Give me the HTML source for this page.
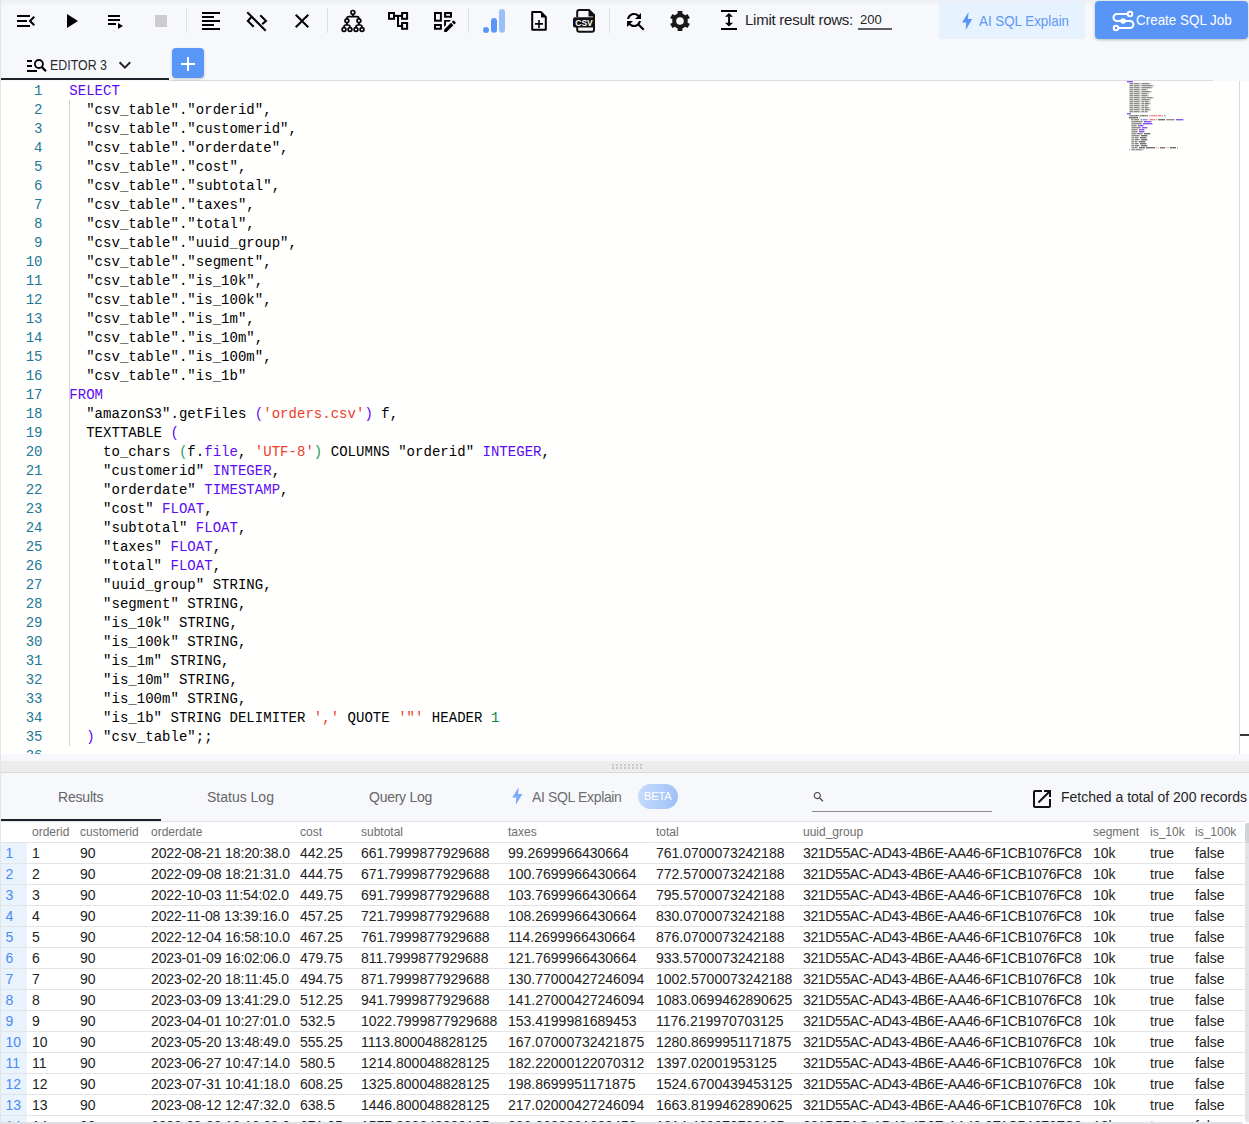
<!DOCTYPE html>
<html><head><meta charset="utf-8"><style>
html,body{margin:0;padding:0}
body{width:1249px;height:1124px;overflow:hidden;position:relative;background:#f7f8fc;font-family:"Liberation Sans",sans-serif}
.abs{position:absolute}
.txt{white-space:pre}
.ln{position:absolute;left:0;width:41.5px;text-align:right;font-family:"Liberation Mono",monospace;font-size:14px;line-height:19px;color:#237893;white-space:pre}
.cl{position:absolute;left:68.3px;font-family:"Liberation Mono",monospace;font-size:14px;line-height:19px;color:#000;white-space:pre;letter-spacing:0.03px}
.hd{font-size:12px;line-height:16px;color:#6e6e6e}
.cell{font-size:14px;line-height:20px;color:#222}
.rn{left:0;width:20px;text-align:left;padding-left:4.5px;font-size:14px;line-height:20px;color:#4a8af4}
</style></head><body>
<div class="abs" style="left:0;top:0;width:1px;height:1124px;background:#e4e4e4;z-index:5"></div>
<div class="abs" style="left:0;top:0;width:1249px;height:6px;background:linear-gradient(#eceef3,#f7f8fc)"></div>
<svg class="abs" style="left:0;top:0" width="760" height="42" viewBox="0 0 760 42"><path transform="translate(14,9)" fill="#000" d="M3 18h13v-2H3v2zm0-5h10v-2H3v2zm0-7v2h13V6H3zm18 9.59L17.42 12 21 8.41 19.59 7l-5 5 5 5L21 15.59z"/><path transform="translate(59,9)" fill="#000" d="M8 5v14l11-7z"/><rect x="108" y="15" width="12" height="2" fill="#000"/><rect x="108" y="19" width="12" height="2" fill="#000"/><rect x="108" y="23" width="8" height="2" fill="#000"/><path d="M118 23L123 26L118 29z" fill="#000"/><rect x="155" y="15" width="12" height="12" fill="#cccccc"/><rect x="186" y="8" width="1" height="25" fill="#dedfe3"/><rect x="327" y="8" width="1" height="25" fill="#dedfe3"/><rect x="468" y="8" width="1" height="25" fill="#dedfe3"/><rect x="609" y="8" width="1" height="25" fill="#dedfe3"/><path transform="translate(199,9)" fill="#000" d="M15 15H3v2h12v-2zm0-8H3v2h12V7zM3 13h18v-2H3v2zm0 8h18v-2H3v2zM3 3v2h18V3H3z"/><g stroke="#000" stroke-width="2" fill="none" stroke-linecap="square"><path d="M248 13L265 30"/><path d="M251 17.5L247.8 21L253 26"/><path d="M261 16L266 21L263 23.5"/></g><path transform="translate(290,9)" fill="#000" d="M19 6.41L17.59 5 12 10.59 6.41 5 5 6.41 10.59 12 5 17.59 6.41 19 12 13.41 17.59 19 19 17.59 13.41 12z"/><g stroke="#000" stroke-width="1.7" fill="none"><circle cx="352.9" cy="12.4" r="1.9"/><path d="M352.9 14.3V16.7"/><path d="M346.9 19V18.7a2 2 0 0 1 2-2h8a2 2 0 0 1 2 2V19"/><circle cx="346.9" cy="20.8" r="1.9"/><circle cx="358.9" cy="20.8" r="1.9"/><path d="M346.9 22.7V25"/><path d="M358.9 22.7V25"/><path d="M344 27.6V27a2 2 0 0 1 2-2h2a2 2 0 0 1 2 2v.6"/><path d="M356 27.6V27a2 2 0 0 1 2-2h2a2 2 0 0 1 2 2v.6"/><circle cx="344" cy="29.5" r="1.9"/><circle cx="350" cy="29.5" r="1.9"/><circle cx="356" cy="29.5" r="1.9"/><circle cx="362" cy="29.5" r="1.9"/></g><g stroke="#000" stroke-width="2" fill="none"><rect x="389" y="13" width="5" height="5.8"/><rect x="402.1" y="13" width="5" height="5.8"/><rect x="402.1" y="23" width="5" height="5.8"/><path d="M394.8 15.9H402"/><path d="M398 15.9V25.9H402"/></g><g stroke="#000" stroke-width="2" fill="none"><rect x="435" y="13" width="5.9" height="7.7"/><rect x="445.1" y="13" width="5.9" height="3.7"/><rect x="435" y="25" width="5.9" height="3.75"/></g><path d="M444.1 20H451L449.2 21.8H446V25L444.1 27z" fill="#000"/><path d="M444.2 32V29.6L451 22.8L453.4 25.2L446.6 32z" fill="#000"/><path d="M451.8 22L453 20.8a0.8 0.8 0 0 1 1.1 0L455.4 22.1a0.8 0.8 0 0 1 0 1.1L454.2 24.4z" fill="#000"/><circle cx="486" cy="30" r="3" fill="#5896f8"/><rect x="491" y="18" width="6" height="14.7" rx="3" fill="#5896f8"/><rect x="499" y="9" width="6" height="23.7" rx="3" fill="#9ac0f8"/><path d="M532.2 12.1H541L545.8 16.9V29.8H532.2z" stroke="#000" stroke-width="2" fill="none" stroke-linejoin="round"/><path d="M541 11.5V17.5H546.5z" fill="#000"/><path d="M535 23.9H543M539 20V28" stroke="#000" stroke-width="1.6"/><path d="M577.2 17V11.9a2 2 0 0 1 2-2H589L594 15V29.7a2 2 0 0 1-2 2H579.2a2 2 0 0 1-2-2V27" stroke="#111" stroke-width="2" fill="none"/><path d="M588.5 9.5V16.5H595z" fill="#111"/><path d="M575 17.2H595V27.6H575a2 2 0 0 1-2-2V19.2a2 2 0 0 1 2-2z" fill="#111"/><text x="584" y="25.6" font-family="Liberation Sans" font-weight="bold" font-size="8.5" fill="#fff" text-anchor="middle">CSV</text><rect x="578.5" y="28.3" width="15" height="1.8" fill="#fff" opacity="0.0"/><path transform="translate(623,9)" fill="#000" d="M11 6c1.38 0 2.63.56 3.54 1.46L12 10h6V4l-2.050 2.05C14.68 4.780 12.93 4 11 4c-3.53 0-6.43 2.61-6.92 6H6.1c.46-2.28 2.48-4 4.9-4zm5.64 9.14c.66-.9 1.12-1.97 1.28-3.14H15.9c-.46 2.28-2.48 4-4.9 4-1.38 0-2.63-.56-3.54-1.46L10 12H4v6l2.05-2.05C7.32 17.22 9.07 18 11 18c1.55 0 2.98-.51 4.14-1.36L20 21.49 21.490 20l-4.85-4.86z"/><rect x="677.6" y="11" width="4.8" height="5" transform="rotate(0 680 21)" fill="#1a1a1a"/><rect x="677.6" y="11" width="4.8" height="5" transform="rotate(60 680 21)" fill="#1a1a1a"/><rect x="677.6" y="11" width="4.8" height="5" transform="rotate(120 680 21)" fill="#1a1a1a"/><rect x="677.6" y="11" width="4.8" height="5" transform="rotate(180 680 21)" fill="#1a1a1a"/><rect x="677.6" y="11" width="4.8" height="5" transform="rotate(240 680 21)" fill="#1a1a1a"/><rect x="677.6" y="11" width="4.8" height="5" transform="rotate(300 680 21)" fill="#1a1a1a"/><circle cx="680" cy="21" r="5.8" fill="none" stroke="#1a1a1a" stroke-width="4"/><rect x="721" y="10" width="16" height="2" fill="#000"/><rect x="721" y="28" width="16" height="2" fill="#000"/><path d="M729 13L733 16.8H725z" fill="#000"/><path d="M729 26.6L733 22.8H725z" fill="#000"/><rect x="728.1" y="16.5" width="1.9" height="6.5" fill="#000"/></svg>
<div class="abs txt" style="left:745px;top:10.8px;font-size:15px;letter-spacing:-0.25px;color:#1f1f1f;line-height:18px">Limit result rows:</div>
<div class="abs txt" style="left:860px;top:12.3px;font-size:13px;color:#1f1f1f;line-height:16px">200</div>
<div class="abs" style="left:858px;top:28px;width:34px;height:2px;background:#5f5f5f"></div>
<div class="abs" style="left:939px;top:1px;width:146px;height:38px;border-radius:4px;background:#e6f2fd"></div>
<svg class="abs" style="left:955px;top:5px" width="30" height="30" viewBox="955 5 30 30"><path d="M968.6 12L967.9 19H972.3L965.7 30L966.2 22.6H962z" fill="#5a96f8"/></svg>
<div class="abs txt" style="left:978.5px;top:12px;font-size:15px;transform:scaleX(0.89);transform-origin:0 0;color:#5e97f6;line-height:18px">AI SQL Explain</div>
<div class="abs" style="left:1095px;top:1px;width:153px;height:38px;border-radius:4px;background:#5995f7;box-shadow:0 1px 3px rgba(0,0,0,0.25)"></div>
<svg class="abs" style="left:1100px;top:0" width="40" height="40" viewBox="1100 0 40 40"><g stroke="#fff" stroke-width="2" fill="none"><path d="M1127.5 14H1117a3.5 3.5 0 0 0 0 7H1130a3.5 3.5 0 0 1 0 7H1118.5"/><circle cx="1130" cy="14" r="2.3"/><circle cx="1116" cy="28" r="2.3"/></g><circle cx="1123.1" cy="21" r="2.8" fill="#fff"/></svg>
<div class="abs txt" style="left:1135.5px;top:10.5px;font-size:15px;transform:scaleX(0.895);transform-origin:0 0;color:#fff;line-height:18px">Create SQL Job</div>
<svg class="abs" style="left:0;top:42px" width="140" height="40" viewBox="0 42 140 40"><g fill="#000"><rect x="27" y="60" width="5" height="2"/><rect x="27" y="65" width="5" height="2"/><rect x="27" y="70" width="10" height="2"/></g><circle cx="38.9" cy="64" r="4" stroke="#000" stroke-width="1.8" fill="none"/><path d="M41.8 67L46 71.2" stroke="#000" stroke-width="2.3"/><path transform="translate(112.9,53)" fill="#222" d="M16.59 8.59L12 13.17 7.41 8.59 6 10l6 6 6-6z"/></svg>
<div class="abs txt" style="left:49.5px;top:56.5px;font-size:14px;transform:scaleX(0.885);transform-origin:0 0;color:#2b2b2b;line-height:17px">EDITOR 3</div>
<div class="abs" style="left:1px;top:78px;width:168px;height:2px;background:#1e232b"></div>
<div class="abs" style="left:169px;top:80px;width:1044px;height:1px;background:#dcdcdc"></div>
<div class="abs" style="left:172px;top:48px;width:32px;height:30px;border-radius:4px;background:#5896f8;box-shadow:0 1px 3px rgba(0,0,0,0.2)"></div>
<div class="abs" style="left:181px;top:63px;width:14px;height:2px;background:#fff"></div><div class="abs" style="left:187px;top:57px;width:2px;height:14px;background:#fff"></div>
<div class="abs" style="left:1px;top:81px;width:1248px;height:673px;background:#fffffe;overflow:hidden">
<div class="ln" style="top:1px">1</div><div class="ln" style="top:20px">2</div><div class="ln" style="top:39px">3</div><div class="ln" style="top:58px">4</div><div class="ln" style="top:77px">5</div><div class="ln" style="top:96px">6</div><div class="ln" style="top:115px">7</div><div class="ln" style="top:134px">8</div><div class="ln" style="top:153px">9</div><div class="ln" style="top:172px">10</div><div class="ln" style="top:191px">11</div><div class="ln" style="top:210px">12</div><div class="ln" style="top:229px">13</div><div class="ln" style="top:248px">14</div><div class="ln" style="top:267px">15</div><div class="ln" style="top:286px">16</div><div class="ln" style="top:305px">17</div><div class="ln" style="top:324px">18</div><div class="ln" style="top:343px">19</div><div class="ln" style="top:362px">20</div><div class="ln" style="top:381px">21</div><div class="ln" style="top:400px">22</div><div class="ln" style="top:419px">23</div><div class="ln" style="top:438px">24</div><div class="ln" style="top:457px">25</div><div class="ln" style="top:476px">26</div><div class="ln" style="top:495px">27</div><div class="ln" style="top:514px">28</div><div class="ln" style="top:533px">29</div><div class="ln" style="top:552px">30</div><div class="ln" style="top:571px">31</div><div class="ln" style="top:590px">32</div><div class="ln" style="top:609px">33</div><div class="ln" style="top:628px">34</div><div class="ln" style="top:647px">35</div><div class="ln" style="top:666px">36</div>
<div class="abs" style="left:68px;top:19px;width:1px;height:646px;background:#d3d3d3"></div>
<div class="cl" style="top:1px"><span style="color:#5a0af5">SELECT</span></div><div class="cl" style="top:20px">  &quot;csv_table&quot;.&quot;orderid&quot;,</div><div class="cl" style="top:39px">  &quot;csv_table&quot;.&quot;customerid&quot;,</div><div class="cl" style="top:58px">  &quot;csv_table&quot;.&quot;orderdate&quot;,</div><div class="cl" style="top:77px">  &quot;csv_table&quot;.&quot;cost&quot;,</div><div class="cl" style="top:96px">  &quot;csv_table&quot;.&quot;subtotal&quot;,</div><div class="cl" style="top:115px">  &quot;csv_table&quot;.&quot;taxes&quot;,</div><div class="cl" style="top:134px">  &quot;csv_table&quot;.&quot;total&quot;,</div><div class="cl" style="top:153px">  &quot;csv_table&quot;.&quot;uuid_group&quot;,</div><div class="cl" style="top:172px">  &quot;csv_table&quot;.&quot;segment&quot;,</div><div class="cl" style="top:191px">  &quot;csv_table&quot;.&quot;is_10k&quot;,</div><div class="cl" style="top:210px">  &quot;csv_table&quot;.&quot;is_100k&quot;,</div><div class="cl" style="top:229px">  &quot;csv_table&quot;.&quot;is_1m&quot;,</div><div class="cl" style="top:248px">  &quot;csv_table&quot;.&quot;is_10m&quot;,</div><div class="cl" style="top:267px">  &quot;csv_table&quot;.&quot;is_100m&quot;,</div><div class="cl" style="top:286px">  &quot;csv_table&quot;.&quot;is_1b&quot;</div><div class="cl" style="top:305px"><span style="color:#5a0af5">FROM</span></div><div class="cl" style="top:324px">  &quot;amazonS3&quot;.getFiles <span style="color:#5a0af5">(</span><span style="color:#ee3b2a">&#x27;orders.csv&#x27;</span><span style="color:#5a0af5">)</span> f,</div><div class="cl" style="top:343px">  TEXTTABLE <span style="color:#5a0af5">(</span></div><div class="cl" style="top:362px">    to_chars <span style="color:#2f9a55">(</span>f.<span style="color:#5a0af5">file</span>, <span style="color:#ee3b2a">&#x27;UTF-8&#x27;</span><span style="color:#2f9a55">)</span> COLUMNS &quot;orderid&quot; <span style="color:#5a0af5">INTEGER</span>,</div><div class="cl" style="top:381px">    &quot;customerid&quot; <span style="color:#5a0af5">INTEGER</span>,</div><div class="cl" style="top:400px">    &quot;orderdate&quot; <span style="color:#5a0af5">TIMESTAMP</span>,</div><div class="cl" style="top:419px">    &quot;cost&quot; <span style="color:#5a0af5">FLOAT</span>,</div><div class="cl" style="top:438px">    &quot;subtotal&quot; <span style="color:#5a0af5">FLOAT</span>,</div><div class="cl" style="top:457px">    &quot;taxes&quot; <span style="color:#5a0af5">FLOAT</span>,</div><div class="cl" style="top:476px">    &quot;total&quot; <span style="color:#5a0af5">FLOAT</span>,</div><div class="cl" style="top:495px">    &quot;uuid_group&quot; STRING,</div><div class="cl" style="top:514px">    &quot;segment&quot; STRING,</div><div class="cl" style="top:533px">    &quot;is_10k&quot; STRING,</div><div class="cl" style="top:552px">    &quot;is_100k&quot; STRING,</div><div class="cl" style="top:571px">    &quot;is_1m&quot; STRING,</div><div class="cl" style="top:590px">    &quot;is_10m&quot; STRING,</div><div class="cl" style="top:609px">    &quot;is_100m&quot; STRING,</div><div class="cl" style="top:628px">    &quot;is_1b&quot; STRING DELIMITER <span style="color:#ee3b2a">&#x27;,&#x27;</span> QUOTE <span style="color:#ee3b2a">&#x27;&quot;&#x27;</span> HEADER <span style="color:#098658">1</span></div><div class="cl" style="top:647px">  <span style="color:#5a0af5">)</span> &quot;csv_table&quot;;;</div>
<svg class="abs" style="left:1126px;top:0" width="90" height="80"><rect x="0" y="0" width="1" height="1" fill="#5a0af5" fill-opacity="0.70"/><rect x="0" y="1" width="1" height="1" fill="#5a0af5" fill-opacity="0.27"/><rect x="1" y="0" width="1" height="1" fill="#5a0af5" fill-opacity="0.70"/><rect x="1" y="1" width="1" height="1" fill="#5a0af5" fill-opacity="0.27"/><rect x="2" y="0" width="1" height="1" fill="#5a0af5" fill-opacity="0.70"/><rect x="2" y="1" width="1" height="1" fill="#5a0af5" fill-opacity="0.27"/><rect x="3" y="0" width="1" height="1" fill="#5a0af5" fill-opacity="0.70"/><rect x="3" y="1" width="1" height="1" fill="#5a0af5" fill-opacity="0.27"/><rect x="4" y="0" width="1" height="1" fill="#5a0af5" fill-opacity="0.70"/><rect x="4" y="1" width="1" height="1" fill="#5a0af5" fill-opacity="0.27"/><rect x="5" y="0" width="1" height="1" fill="#5a0af5" fill-opacity="0.70"/><rect x="5" y="1" width="1" height="1" fill="#5a0af5" fill-opacity="0.27"/><rect x="2" y="2" width="1" height="1" fill="#000" fill-opacity="0.27"/><rect x="2" y="3" width="1" height="1" fill="#000" fill-opacity="0.10"/><rect x="3" y="2" width="1" height="1" fill="#000" fill-opacity="0.45"/><rect x="3" y="3" width="1" height="1" fill="#000" fill-opacity="0.17"/><rect x="4" y="2" width="1" height="1" fill="#000" fill-opacity="0.45"/><rect x="4" y="3" width="1" height="1" fill="#000" fill-opacity="0.17"/><rect x="5" y="2" width="1" height="1" fill="#000" fill-opacity="0.45"/><rect x="5" y="3" width="1" height="1" fill="#000" fill-opacity="0.17"/><rect x="6" y="2" width="1" height="1" fill="#000" fill-opacity="0.20"/><rect x="6" y="3" width="1" height="1" fill="#000" fill-opacity="0.08"/><rect x="7" y="2" width="1" height="1" fill="#000" fill-opacity="0.45"/><rect x="7" y="3" width="1" height="1" fill="#000" fill-opacity="0.17"/><rect x="8" y="2" width="1" height="1" fill="#000" fill-opacity="0.45"/><rect x="8" y="3" width="1" height="1" fill="#000" fill-opacity="0.17"/><rect x="9" y="2" width="1" height="1" fill="#000" fill-opacity="0.45"/><rect x="9" y="3" width="1" height="1" fill="#000" fill-opacity="0.17"/><rect x="10" y="2" width="1" height="1" fill="#000" fill-opacity="0.45"/><rect x="10" y="3" width="1" height="1" fill="#000" fill-opacity="0.17"/><rect x="11" y="2" width="1" height="1" fill="#000" fill-opacity="0.45"/><rect x="11" y="3" width="1" height="1" fill="#000" fill-opacity="0.17"/><rect x="12" y="2" width="1" height="1" fill="#000" fill-opacity="0.27"/><rect x="12" y="3" width="1" height="1" fill="#000" fill-opacity="0.10"/><rect x="13" y="2" width="1" height="1" fill="#000" fill-opacity="0.20"/><rect x="13" y="3" width="1" height="1" fill="#000" fill-opacity="0.08"/><rect x="14" y="2" width="1" height="1" fill="#000" fill-opacity="0.27"/><rect x="14" y="3" width="1" height="1" fill="#000" fill-opacity="0.10"/><rect x="15" y="2" width="1" height="1" fill="#000" fill-opacity="0.45"/><rect x="15" y="3" width="1" height="1" fill="#000" fill-opacity="0.17"/><rect x="16" y="2" width="1" height="1" fill="#000" fill-opacity="0.45"/><rect x="16" y="3" width="1" height="1" fill="#000" fill-opacity="0.17"/><rect x="17" y="2" width="1" height="1" fill="#000" fill-opacity="0.45"/><rect x="17" y="3" width="1" height="1" fill="#000" fill-opacity="0.17"/><rect x="18" y="2" width="1" height="1" fill="#000" fill-opacity="0.45"/><rect x="18" y="3" width="1" height="1" fill="#000" fill-opacity="0.17"/><rect x="19" y="2" width="1" height="1" fill="#000" fill-opacity="0.45"/><rect x="19" y="3" width="1" height="1" fill="#000" fill-opacity="0.17"/><rect x="20" y="2" width="1" height="1" fill="#000" fill-opacity="0.45"/><rect x="20" y="3" width="1" height="1" fill="#000" fill-opacity="0.17"/><rect x="21" y="2" width="1" height="1" fill="#000" fill-opacity="0.45"/><rect x="21" y="3" width="1" height="1" fill="#000" fill-opacity="0.17"/><rect x="22" y="2" width="1" height="1" fill="#000" fill-opacity="0.27"/><rect x="22" y="3" width="1" height="1" fill="#000" fill-opacity="0.10"/><rect x="23" y="2" width="1" height="1" fill="#000" fill-opacity="0.20"/><rect x="23" y="3" width="1" height="1" fill="#000" fill-opacity="0.08"/><rect x="2" y="4" width="1" height="1" fill="#000" fill-opacity="0.27"/><rect x="2" y="5" width="1" height="1" fill="#000" fill-opacity="0.10"/><rect x="3" y="4" width="1" height="1" fill="#000" fill-opacity="0.45"/><rect x="3" y="5" width="1" height="1" fill="#000" fill-opacity="0.17"/><rect x="4" y="4" width="1" height="1" fill="#000" fill-opacity="0.45"/><rect x="4" y="5" width="1" height="1" fill="#000" fill-opacity="0.17"/><rect x="5" y="4" width="1" height="1" fill="#000" fill-opacity="0.45"/><rect x="5" y="5" width="1" height="1" fill="#000" fill-opacity="0.17"/><rect x="6" y="4" width="1" height="1" fill="#000" fill-opacity="0.20"/><rect x="6" y="5" width="1" height="1" fill="#000" fill-opacity="0.08"/><rect x="7" y="4" width="1" height="1" fill="#000" fill-opacity="0.45"/><rect x="7" y="5" width="1" height="1" fill="#000" fill-opacity="0.17"/><rect x="8" y="4" width="1" height="1" fill="#000" fill-opacity="0.45"/><rect x="8" y="5" width="1" height="1" fill="#000" fill-opacity="0.17"/><rect x="9" y="4" width="1" height="1" fill="#000" fill-opacity="0.45"/><rect x="9" y="5" width="1" height="1" fill="#000" fill-opacity="0.17"/><rect x="10" y="4" width="1" height="1" fill="#000" fill-opacity="0.45"/><rect x="10" y="5" width="1" height="1" fill="#000" fill-opacity="0.17"/><rect x="11" y="4" width="1" height="1" fill="#000" fill-opacity="0.45"/><rect x="11" y="5" width="1" height="1" fill="#000" fill-opacity="0.17"/><rect x="12" y="4" width="1" height="1" fill="#000" fill-opacity="0.27"/><rect x="12" y="5" width="1" height="1" fill="#000" fill-opacity="0.10"/><rect x="13" y="4" width="1" height="1" fill="#000" fill-opacity="0.20"/><rect x="13" y="5" width="1" height="1" fill="#000" fill-opacity="0.08"/><rect x="14" y="4" width="1" height="1" fill="#000" fill-opacity="0.27"/><rect x="14" y="5" width="1" height="1" fill="#000" fill-opacity="0.10"/><rect x="15" y="4" width="1" height="1" fill="#000" fill-opacity="0.45"/><rect x="15" y="5" width="1" height="1" fill="#000" fill-opacity="0.17"/><rect x="16" y="4" width="1" height="1" fill="#000" fill-opacity="0.45"/><rect x="16" y="5" width="1" height="1" fill="#000" fill-opacity="0.17"/><rect x="17" y="4" width="1" height="1" fill="#000" fill-opacity="0.45"/><rect x="17" y="5" width="1" height="1" fill="#000" fill-opacity="0.17"/><rect x="18" y="4" width="1" height="1" fill="#000" fill-opacity="0.45"/><rect x="18" y="5" width="1" height="1" fill="#000" fill-opacity="0.17"/><rect x="19" y="4" width="1" height="1" fill="#000" fill-opacity="0.45"/><rect x="19" y="5" width="1" height="1" fill="#000" fill-opacity="0.17"/><rect x="20" y="4" width="1" height="1" fill="#000" fill-opacity="0.45"/><rect x="20" y="5" width="1" height="1" fill="#000" fill-opacity="0.17"/><rect x="21" y="4" width="1" height="1" fill="#000" fill-opacity="0.45"/><rect x="21" y="5" width="1" height="1" fill="#000" fill-opacity="0.17"/><rect x="22" y="4" width="1" height="1" fill="#000" fill-opacity="0.45"/><rect x="22" y="5" width="1" height="1" fill="#000" fill-opacity="0.17"/><rect x="23" y="4" width="1" height="1" fill="#000" fill-opacity="0.45"/><rect x="23" y="5" width="1" height="1" fill="#000" fill-opacity="0.17"/><rect x="24" y="4" width="1" height="1" fill="#000" fill-opacity="0.45"/><rect x="24" y="5" width="1" height="1" fill="#000" fill-opacity="0.17"/><rect x="25" y="4" width="1" height="1" fill="#000" fill-opacity="0.27"/><rect x="25" y="5" width="1" height="1" fill="#000" fill-opacity="0.10"/><rect x="26" y="4" width="1" height="1" fill="#000" fill-opacity="0.20"/><rect x="26" y="5" width="1" height="1" fill="#000" fill-opacity="0.08"/><rect x="2" y="6" width="1" height="1" fill="#000" fill-opacity="0.27"/><rect x="2" y="7" width="1" height="1" fill="#000" fill-opacity="0.10"/><rect x="3" y="6" width="1" height="1" fill="#000" fill-opacity="0.45"/><rect x="3" y="7" width="1" height="1" fill="#000" fill-opacity="0.17"/><rect x="4" y="6" width="1" height="1" fill="#000" fill-opacity="0.45"/><rect x="4" y="7" width="1" height="1" fill="#000" fill-opacity="0.17"/><rect x="5" y="6" width="1" height="1" fill="#000" fill-opacity="0.45"/><rect x="5" y="7" width="1" height="1" fill="#000" fill-opacity="0.17"/><rect x="6" y="6" width="1" height="1" fill="#000" fill-opacity="0.20"/><rect x="6" y="7" width="1" height="1" fill="#000" fill-opacity="0.08"/><rect x="7" y="6" width="1" height="1" fill="#000" fill-opacity="0.45"/><rect x="7" y="7" width="1" height="1" fill="#000" fill-opacity="0.17"/><rect x="8" y="6" width="1" height="1" fill="#000" fill-opacity="0.45"/><rect x="8" y="7" width="1" height="1" fill="#000" fill-opacity="0.17"/><rect x="9" y="6" width="1" height="1" fill="#000" fill-opacity="0.45"/><rect x="9" y="7" width="1" height="1" fill="#000" fill-opacity="0.17"/><rect x="10" y="6" width="1" height="1" fill="#000" fill-opacity="0.45"/><rect x="10" y="7" width="1" height="1" fill="#000" fill-opacity="0.17"/><rect x="11" y="6" width="1" height="1" fill="#000" fill-opacity="0.45"/><rect x="11" y="7" width="1" height="1" fill="#000" fill-opacity="0.17"/><rect x="12" y="6" width="1" height="1" fill="#000" fill-opacity="0.27"/><rect x="12" y="7" width="1" height="1" fill="#000" fill-opacity="0.10"/><rect x="13" y="6" width="1" height="1" fill="#000" fill-opacity="0.20"/><rect x="13" y="7" width="1" height="1" fill="#000" fill-opacity="0.08"/><rect x="14" y="6" width="1" height="1" fill="#000" fill-opacity="0.27"/><rect x="14" y="7" width="1" height="1" fill="#000" fill-opacity="0.10"/><rect x="15" y="6" width="1" height="1" fill="#000" fill-opacity="0.45"/><rect x="15" y="7" width="1" height="1" fill="#000" fill-opacity="0.17"/><rect x="16" y="6" width="1" height="1" fill="#000" fill-opacity="0.45"/><rect x="16" y="7" width="1" height="1" fill="#000" fill-opacity="0.17"/><rect x="17" y="6" width="1" height="1" fill="#000" fill-opacity="0.45"/><rect x="17" y="7" width="1" height="1" fill="#000" fill-opacity="0.17"/><rect x="18" y="6" width="1" height="1" fill="#000" fill-opacity="0.45"/><rect x="18" y="7" width="1" height="1" fill="#000" fill-opacity="0.17"/><rect x="19" y="6" width="1" height="1" fill="#000" fill-opacity="0.45"/><rect x="19" y="7" width="1" height="1" fill="#000" fill-opacity="0.17"/><rect x="20" y="6" width="1" height="1" fill="#000" fill-opacity="0.45"/><rect x="20" y="7" width="1" height="1" fill="#000" fill-opacity="0.17"/><rect x="21" y="6" width="1" height="1" fill="#000" fill-opacity="0.45"/><rect x="21" y="7" width="1" height="1" fill="#000" fill-opacity="0.17"/><rect x="22" y="6" width="1" height="1" fill="#000" fill-opacity="0.45"/><rect x="22" y="7" width="1" height="1" fill="#000" fill-opacity="0.17"/><rect x="23" y="6" width="1" height="1" fill="#000" fill-opacity="0.45"/><rect x="23" y="7" width="1" height="1" fill="#000" fill-opacity="0.17"/><rect x="24" y="6" width="1" height="1" fill="#000" fill-opacity="0.27"/><rect x="24" y="7" width="1" height="1" fill="#000" fill-opacity="0.10"/><rect x="25" y="6" width="1" height="1" fill="#000" fill-opacity="0.20"/><rect x="25" y="7" width="1" height="1" fill="#000" fill-opacity="0.08"/><rect x="2" y="8" width="1" height="1" fill="#000" fill-opacity="0.27"/><rect x="2" y="9" width="1" height="1" fill="#000" fill-opacity="0.10"/><rect x="3" y="8" width="1" height="1" fill="#000" fill-opacity="0.45"/><rect x="3" y="9" width="1" height="1" fill="#000" fill-opacity="0.17"/><rect x="4" y="8" width="1" height="1" fill="#000" fill-opacity="0.45"/><rect x="4" y="9" width="1" height="1" fill="#000" fill-opacity="0.17"/><rect x="5" y="8" width="1" height="1" fill="#000" fill-opacity="0.45"/><rect x="5" y="9" width="1" height="1" fill="#000" fill-opacity="0.17"/><rect x="6" y="8" width="1" height="1" fill="#000" fill-opacity="0.20"/><rect x="6" y="9" width="1" height="1" fill="#000" fill-opacity="0.08"/><rect x="7" y="8" width="1" height="1" fill="#000" fill-opacity="0.45"/><rect x="7" y="9" width="1" height="1" fill="#000" fill-opacity="0.17"/><rect x="8" y="8" width="1" height="1" fill="#000" fill-opacity="0.45"/><rect x="8" y="9" width="1" height="1" fill="#000" fill-opacity="0.17"/><rect x="9" y="8" width="1" height="1" fill="#000" fill-opacity="0.45"/><rect x="9" y="9" width="1" height="1" fill="#000" fill-opacity="0.17"/><rect x="10" y="8" width="1" height="1" fill="#000" fill-opacity="0.45"/><rect x="10" y="9" width="1" height="1" fill="#000" fill-opacity="0.17"/><rect x="11" y="8" width="1" height="1" fill="#000" fill-opacity="0.45"/><rect x="11" y="9" width="1" height="1" fill="#000" fill-opacity="0.17"/><rect x="12" y="8" width="1" height="1" fill="#000" fill-opacity="0.27"/><rect x="12" y="9" width="1" height="1" fill="#000" fill-opacity="0.10"/><rect x="13" y="8" width="1" height="1" fill="#000" fill-opacity="0.20"/><rect x="13" y="9" width="1" height="1" fill="#000" fill-opacity="0.08"/><rect x="14" y="8" width="1" height="1" fill="#000" fill-opacity="0.27"/><rect x="14" y="9" width="1" height="1" fill="#000" fill-opacity="0.10"/><rect x="15" y="8" width="1" height="1" fill="#000" fill-opacity="0.45"/><rect x="15" y="9" width="1" height="1" fill="#000" fill-opacity="0.17"/><rect x="16" y="8" width="1" height="1" fill="#000" fill-opacity="0.45"/><rect x="16" y="9" width="1" height="1" fill="#000" fill-opacity="0.17"/><rect x="17" y="8" width="1" height="1" fill="#000" fill-opacity="0.45"/><rect x="17" y="9" width="1" height="1" fill="#000" fill-opacity="0.17"/><rect x="18" y="8" width="1" height="1" fill="#000" fill-opacity="0.45"/><rect x="18" y="9" width="1" height="1" fill="#000" fill-opacity="0.17"/><rect x="19" y="8" width="1" height="1" fill="#000" fill-opacity="0.27"/><rect x="19" y="9" width="1" height="1" fill="#000" fill-opacity="0.10"/><rect x="20" y="8" width="1" height="1" fill="#000" fill-opacity="0.20"/><rect x="20" y="9" width="1" height="1" fill="#000" fill-opacity="0.08"/><rect x="2" y="10" width="1" height="1" fill="#000" fill-opacity="0.27"/><rect x="2" y="11" width="1" height="1" fill="#000" fill-opacity="0.10"/><rect x="3" y="10" width="1" height="1" fill="#000" fill-opacity="0.45"/><rect x="3" y="11" width="1" height="1" fill="#000" fill-opacity="0.17"/><rect x="4" y="10" width="1" height="1" fill="#000" fill-opacity="0.45"/><rect x="4" y="11" width="1" height="1" fill="#000" fill-opacity="0.17"/><rect x="5" y="10" width="1" height="1" fill="#000" fill-opacity="0.45"/><rect x="5" y="11" width="1" height="1" fill="#000" fill-opacity="0.17"/><rect x="6" y="10" width="1" height="1" fill="#000" fill-opacity="0.20"/><rect x="6" y="11" width="1" height="1" fill="#000" fill-opacity="0.08"/><rect x="7" y="10" width="1" height="1" fill="#000" fill-opacity="0.45"/><rect x="7" y="11" width="1" height="1" fill="#000" fill-opacity="0.17"/><rect x="8" y="10" width="1" height="1" fill="#000" fill-opacity="0.45"/><rect x="8" y="11" width="1" height="1" fill="#000" fill-opacity="0.17"/><rect x="9" y="10" width="1" height="1" fill="#000" fill-opacity="0.45"/><rect x="9" y="11" width="1" height="1" fill="#000" fill-opacity="0.17"/><rect x="10" y="10" width="1" height="1" fill="#000" fill-opacity="0.45"/><rect x="10" y="11" width="1" height="1" fill="#000" fill-opacity="0.17"/><rect x="11" y="10" width="1" height="1" fill="#000" fill-opacity="0.45"/><rect x="11" y="11" width="1" height="1" fill="#000" fill-opacity="0.17"/><rect x="12" y="10" width="1" height="1" fill="#000" fill-opacity="0.27"/><rect x="12" y="11" width="1" height="1" fill="#000" fill-opacity="0.10"/><rect x="13" y="10" width="1" height="1" fill="#000" fill-opacity="0.20"/><rect x="13" y="11" width="1" height="1" fill="#000" fill-opacity="0.08"/><rect x="14" y="10" width="1" height="1" fill="#000" fill-opacity="0.27"/><rect x="14" y="11" width="1" height="1" fill="#000" fill-opacity="0.10"/><rect x="15" y="10" width="1" height="1" fill="#000" fill-opacity="0.45"/><rect x="15" y="11" width="1" height="1" fill="#000" fill-opacity="0.17"/><rect x="16" y="10" width="1" height="1" fill="#000" fill-opacity="0.45"/><rect x="16" y="11" width="1" height="1" fill="#000" fill-opacity="0.17"/><rect x="17" y="10" width="1" height="1" fill="#000" fill-opacity="0.45"/><rect x="17" y="11" width="1" height="1" fill="#000" fill-opacity="0.17"/><rect x="18" y="10" width="1" height="1" fill="#000" fill-opacity="0.45"/><rect x="18" y="11" width="1" height="1" fill="#000" fill-opacity="0.17"/><rect x="19" y="10" width="1" height="1" fill="#000" fill-opacity="0.45"/><rect x="19" y="11" width="1" height="1" fill="#000" fill-opacity="0.17"/><rect x="20" y="10" width="1" height="1" fill="#000" fill-opacity="0.45"/><rect x="20" y="11" width="1" height="1" fill="#000" fill-opacity="0.17"/><rect x="21" y="10" width="1" height="1" fill="#000" fill-opacity="0.45"/><rect x="21" y="11" width="1" height="1" fill="#000" fill-opacity="0.17"/><rect x="22" y="10" width="1" height="1" fill="#000" fill-opacity="0.45"/><rect x="22" y="11" width="1" height="1" fill="#000" fill-opacity="0.17"/><rect x="23" y="10" width="1" height="1" fill="#000" fill-opacity="0.27"/><rect x="23" y="11" width="1" height="1" fill="#000" fill-opacity="0.10"/><rect x="24" y="10" width="1" height="1" fill="#000" fill-opacity="0.20"/><rect x="24" y="11" width="1" height="1" fill="#000" fill-opacity="0.08"/><rect x="2" y="12" width="1" height="1" fill="#000" fill-opacity="0.27"/><rect x="2" y="13" width="1" height="1" fill="#000" fill-opacity="0.10"/><rect x="3" y="12" width="1" height="1" fill="#000" fill-opacity="0.45"/><rect x="3" y="13" width="1" height="1" fill="#000" fill-opacity="0.17"/><rect x="4" y="12" width="1" height="1" fill="#000" fill-opacity="0.45"/><rect x="4" y="13" width="1" height="1" fill="#000" fill-opacity="0.17"/><rect x="5" y="12" width="1" height="1" fill="#000" fill-opacity="0.45"/><rect x="5" y="13" width="1" height="1" fill="#000" fill-opacity="0.17"/><rect x="6" y="12" width="1" height="1" fill="#000" fill-opacity="0.20"/><rect x="6" y="13" width="1" height="1" fill="#000" fill-opacity="0.08"/><rect x="7" y="12" width="1" height="1" fill="#000" fill-opacity="0.45"/><rect x="7" y="13" width="1" height="1" fill="#000" fill-opacity="0.17"/><rect x="8" y="12" width="1" height="1" fill="#000" fill-opacity="0.45"/><rect x="8" y="13" width="1" height="1" fill="#000" fill-opacity="0.17"/><rect x="9" y="12" width="1" height="1" fill="#000" fill-opacity="0.45"/><rect x="9" y="13" width="1" height="1" fill="#000" fill-opacity="0.17"/><rect x="10" y="12" width="1" height="1" fill="#000" fill-opacity="0.45"/><rect x="10" y="13" width="1" height="1" fill="#000" fill-opacity="0.17"/><rect x="11" y="12" width="1" height="1" fill="#000" fill-opacity="0.45"/><rect x="11" y="13" width="1" height="1" fill="#000" fill-opacity="0.17"/><rect x="12" y="12" width="1" height="1" fill="#000" fill-opacity="0.27"/><rect x="12" y="13" width="1" height="1" fill="#000" fill-opacity="0.10"/><rect x="13" y="12" width="1" height="1" fill="#000" fill-opacity="0.20"/><rect x="13" y="13" width="1" height="1" fill="#000" fill-opacity="0.08"/><rect x="14" y="12" width="1" height="1" fill="#000" fill-opacity="0.27"/><rect x="14" y="13" width="1" height="1" fill="#000" fill-opacity="0.10"/><rect x="15" y="12" width="1" height="1" fill="#000" fill-opacity="0.45"/><rect x="15" y="13" width="1" height="1" fill="#000" fill-opacity="0.17"/><rect x="16" y="12" width="1" height="1" fill="#000" fill-opacity="0.45"/><rect x="16" y="13" width="1" height="1" fill="#000" fill-opacity="0.17"/><rect x="17" y="12" width="1" height="1" fill="#000" fill-opacity="0.45"/><rect x="17" y="13" width="1" height="1" fill="#000" fill-opacity="0.17"/><rect x="18" y="12" width="1" height="1" fill="#000" fill-opacity="0.45"/><rect x="18" y="13" width="1" height="1" fill="#000" fill-opacity="0.17"/><rect x="19" y="12" width="1" height="1" fill="#000" fill-opacity="0.45"/><rect x="19" y="13" width="1" height="1" fill="#000" fill-opacity="0.17"/><rect x="20" y="12" width="1" height="1" fill="#000" fill-opacity="0.27"/><rect x="20" y="13" width="1" height="1" fill="#000" fill-opacity="0.10"/><rect x="21" y="12" width="1" height="1" fill="#000" fill-opacity="0.20"/><rect x="21" y="13" width="1" height="1" fill="#000" fill-opacity="0.08"/><rect x="2" y="14" width="1" height="1" fill="#000" fill-opacity="0.27"/><rect x="2" y="15" width="1" height="1" fill="#000" fill-opacity="0.10"/><rect x="3" y="14" width="1" height="1" fill="#000" fill-opacity="0.45"/><rect x="3" y="15" width="1" height="1" fill="#000" fill-opacity="0.17"/><rect x="4" y="14" width="1" height="1" fill="#000" fill-opacity="0.45"/><rect x="4" y="15" width="1" height="1" fill="#000" fill-opacity="0.17"/><rect x="5" y="14" width="1" height="1" fill="#000" fill-opacity="0.45"/><rect x="5" y="15" width="1" height="1" fill="#000" fill-opacity="0.17"/><rect x="6" y="14" width="1" height="1" fill="#000" fill-opacity="0.20"/><rect x="6" y="15" width="1" height="1" fill="#000" fill-opacity="0.08"/><rect x="7" y="14" width="1" height="1" fill="#000" fill-opacity="0.45"/><rect x="7" y="15" width="1" height="1" fill="#000" fill-opacity="0.17"/><rect x="8" y="14" width="1" height="1" fill="#000" fill-opacity="0.45"/><rect x="8" y="15" width="1" height="1" fill="#000" fill-opacity="0.17"/><rect x="9" y="14" width="1" height="1" fill="#000" fill-opacity="0.45"/><rect x="9" y="15" width="1" height="1" fill="#000" fill-opacity="0.17"/><rect x="10" y="14" width="1" height="1" fill="#000" fill-opacity="0.45"/><rect x="10" y="15" width="1" height="1" fill="#000" fill-opacity="0.17"/><rect x="11" y="14" width="1" height="1" fill="#000" fill-opacity="0.45"/><rect x="11" y="15" width="1" height="1" fill="#000" fill-opacity="0.17"/><rect x="12" y="14" width="1" height="1" fill="#000" fill-opacity="0.27"/><rect x="12" y="15" width="1" height="1" fill="#000" fill-opacity="0.10"/><rect x="13" y="14" width="1" height="1" fill="#000" fill-opacity="0.20"/><rect x="13" y="15" width="1" height="1" fill="#000" fill-opacity="0.08"/><rect x="14" y="14" width="1" height="1" fill="#000" fill-opacity="0.27"/><rect x="14" y="15" width="1" height="1" fill="#000" fill-opacity="0.10"/><rect x="15" y="14" width="1" height="1" fill="#000" fill-opacity="0.45"/><rect x="15" y="15" width="1" height="1" fill="#000" fill-opacity="0.17"/><rect x="16" y="14" width="1" height="1" fill="#000" fill-opacity="0.45"/><rect x="16" y="15" width="1" height="1" fill="#000" fill-opacity="0.17"/><rect x="17" y="14" width="1" height="1" fill="#000" fill-opacity="0.45"/><rect x="17" y="15" width="1" height="1" fill="#000" fill-opacity="0.17"/><rect x="18" y="14" width="1" height="1" fill="#000" fill-opacity="0.45"/><rect x="18" y="15" width="1" height="1" fill="#000" fill-opacity="0.17"/><rect x="19" y="14" width="1" height="1" fill="#000" fill-opacity="0.45"/><rect x="19" y="15" width="1" height="1" fill="#000" fill-opacity="0.17"/><rect x="20" y="14" width="1" height="1" fill="#000" fill-opacity="0.27"/><rect x="20" y="15" width="1" height="1" fill="#000" fill-opacity="0.10"/><rect x="21" y="14" width="1" height="1" fill="#000" fill-opacity="0.20"/><rect x="21" y="15" width="1" height="1" fill="#000" fill-opacity="0.08"/><rect x="2" y="16" width="1" height="1" fill="#000" fill-opacity="0.27"/><rect x="2" y="17" width="1" height="1" fill="#000" fill-opacity="0.10"/><rect x="3" y="16" width="1" height="1" fill="#000" fill-opacity="0.45"/><rect x="3" y="17" width="1" height="1" fill="#000" fill-opacity="0.17"/><rect x="4" y="16" width="1" height="1" fill="#000" fill-opacity="0.45"/><rect x="4" y="17" width="1" height="1" fill="#000" fill-opacity="0.17"/><rect x="5" y="16" width="1" height="1" fill="#000" fill-opacity="0.45"/><rect x="5" y="17" width="1" height="1" fill="#000" fill-opacity="0.17"/><rect x="6" y="16" width="1" height="1" fill="#000" fill-opacity="0.20"/><rect x="6" y="17" width="1" height="1" fill="#000" fill-opacity="0.08"/><rect x="7" y="16" width="1" height="1" fill="#000" fill-opacity="0.45"/><rect x="7" y="17" width="1" height="1" fill="#000" fill-opacity="0.17"/><rect x="8" y="16" width="1" height="1" fill="#000" fill-opacity="0.45"/><rect x="8" y="17" width="1" height="1" fill="#000" fill-opacity="0.17"/><rect x="9" y="16" width="1" height="1" fill="#000" fill-opacity="0.45"/><rect x="9" y="17" width="1" height="1" fill="#000" fill-opacity="0.17"/><rect x="10" y="16" width="1" height="1" fill="#000" fill-opacity="0.45"/><rect x="10" y="17" width="1" height="1" fill="#000" fill-opacity="0.17"/><rect x="11" y="16" width="1" height="1" fill="#000" fill-opacity="0.45"/><rect x="11" y="17" width="1" height="1" fill="#000" fill-opacity="0.17"/><rect x="12" y="16" width="1" height="1" fill="#000" fill-opacity="0.27"/><rect x="12" y="17" width="1" height="1" fill="#000" fill-opacity="0.10"/><rect x="13" y="16" width="1" height="1" fill="#000" fill-opacity="0.20"/><rect x="13" y="17" width="1" height="1" fill="#000" fill-opacity="0.08"/><rect x="14" y="16" width="1" height="1" fill="#000" fill-opacity="0.27"/><rect x="14" y="17" width="1" height="1" fill="#000" fill-opacity="0.10"/><rect x="15" y="16" width="1" height="1" fill="#000" fill-opacity="0.45"/><rect x="15" y="17" width="1" height="1" fill="#000" fill-opacity="0.17"/><rect x="16" y="16" width="1" height="1" fill="#000" fill-opacity="0.45"/><rect x="16" y="17" width="1" height="1" fill="#000" fill-opacity="0.17"/><rect x="17" y="16" width="1" height="1" fill="#000" fill-opacity="0.45"/><rect x="17" y="17" width="1" height="1" fill="#000" fill-opacity="0.17"/><rect x="18" y="16" width="1" height="1" fill="#000" fill-opacity="0.45"/><rect x="18" y="17" width="1" height="1" fill="#000" fill-opacity="0.17"/><rect x="19" y="16" width="1" height="1" fill="#000" fill-opacity="0.20"/><rect x="19" y="17" width="1" height="1" fill="#000" fill-opacity="0.08"/><rect x="20" y="16" width="1" height="1" fill="#000" fill-opacity="0.45"/><rect x="20" y="17" width="1" height="1" fill="#000" fill-opacity="0.17"/><rect x="21" y="16" width="1" height="1" fill="#000" fill-opacity="0.45"/><rect x="21" y="17" width="1" height="1" fill="#000" fill-opacity="0.17"/><rect x="22" y="16" width="1" height="1" fill="#000" fill-opacity="0.45"/><rect x="22" y="17" width="1" height="1" fill="#000" fill-opacity="0.17"/><rect x="23" y="16" width="1" height="1" fill="#000" fill-opacity="0.45"/><rect x="23" y="17" width="1" height="1" fill="#000" fill-opacity="0.17"/><rect x="24" y="16" width="1" height="1" fill="#000" fill-opacity="0.45"/><rect x="24" y="17" width="1" height="1" fill="#000" fill-opacity="0.17"/><rect x="25" y="16" width="1" height="1" fill="#000" fill-opacity="0.27"/><rect x="25" y="17" width="1" height="1" fill="#000" fill-opacity="0.10"/><rect x="26" y="16" width="1" height="1" fill="#000" fill-opacity="0.20"/><rect x="26" y="17" width="1" height="1" fill="#000" fill-opacity="0.08"/><rect x="2" y="18" width="1" height="1" fill="#000" fill-opacity="0.27"/><rect x="2" y="19" width="1" height="1" fill="#000" fill-opacity="0.10"/><rect x="3" y="18" width="1" height="1" fill="#000" fill-opacity="0.45"/><rect x="3" y="19" width="1" height="1" fill="#000" fill-opacity="0.17"/><rect x="4" y="18" width="1" height="1" fill="#000" fill-opacity="0.45"/><rect x="4" y="19" width="1" height="1" fill="#000" fill-opacity="0.17"/><rect x="5" y="18" width="1" height="1" fill="#000" fill-opacity="0.45"/><rect x="5" y="19" width="1" height="1" fill="#000" fill-opacity="0.17"/><rect x="6" y="18" width="1" height="1" fill="#000" fill-opacity="0.20"/><rect x="6" y="19" width="1" height="1" fill="#000" fill-opacity="0.08"/><rect x="7" y="18" width="1" height="1" fill="#000" fill-opacity="0.45"/><rect x="7" y="19" width="1" height="1" fill="#000" fill-opacity="0.17"/><rect x="8" y="18" width="1" height="1" fill="#000" fill-opacity="0.45"/><rect x="8" y="19" width="1" height="1" fill="#000" fill-opacity="0.17"/><rect x="9" y="18" width="1" height="1" fill="#000" fill-opacity="0.45"/><rect x="9" y="19" width="1" height="1" fill="#000" fill-opacity="0.17"/><rect x="10" y="18" width="1" height="1" fill="#000" fill-opacity="0.45"/><rect x="10" y="19" width="1" height="1" fill="#000" fill-opacity="0.17"/><rect x="11" y="18" width="1" height="1" fill="#000" fill-opacity="0.45"/><rect x="11" y="19" width="1" height="1" fill="#000" fill-opacity="0.17"/><rect x="12" y="18" width="1" height="1" fill="#000" fill-opacity="0.27"/><rect x="12" y="19" width="1" height="1" fill="#000" fill-opacity="0.10"/><rect x="13" y="18" width="1" height="1" fill="#000" fill-opacity="0.20"/><rect x="13" y="19" width="1" height="1" fill="#000" fill-opacity="0.08"/><rect x="14" y="18" width="1" height="1" fill="#000" fill-opacity="0.27"/><rect x="14" y="19" width="1" height="1" fill="#000" fill-opacity="0.10"/><rect x="15" y="18" width="1" height="1" fill="#000" fill-opacity="0.45"/><rect x="15" y="19" width="1" height="1" fill="#000" fill-opacity="0.17"/><rect x="16" y="18" width="1" height="1" fill="#000" fill-opacity="0.45"/><rect x="16" y="19" width="1" height="1" fill="#000" fill-opacity="0.17"/><rect x="17" y="18" width="1" height="1" fill="#000" fill-opacity="0.45"/><rect x="17" y="19" width="1" height="1" fill="#000" fill-opacity="0.17"/><rect x="18" y="18" width="1" height="1" fill="#000" fill-opacity="0.45"/><rect x="18" y="19" width="1" height="1" fill="#000" fill-opacity="0.17"/><rect x="19" y="18" width="1" height="1" fill="#000" fill-opacity="0.45"/><rect x="19" y="19" width="1" height="1" fill="#000" fill-opacity="0.17"/><rect x="20" y="18" width="1" height="1" fill="#000" fill-opacity="0.45"/><rect x="20" y="19" width="1" height="1" fill="#000" fill-opacity="0.17"/><rect x="21" y="18" width="1" height="1" fill="#000" fill-opacity="0.45"/><rect x="21" y="19" width="1" height="1" fill="#000" fill-opacity="0.17"/><rect x="22" y="18" width="1" height="1" fill="#000" fill-opacity="0.27"/><rect x="22" y="19" width="1" height="1" fill="#000" fill-opacity="0.10"/><rect x="23" y="18" width="1" height="1" fill="#000" fill-opacity="0.20"/><rect x="23" y="19" width="1" height="1" fill="#000" fill-opacity="0.08"/><rect x="2" y="20" width="1" height="1" fill="#000" fill-opacity="0.27"/><rect x="2" y="21" width="1" height="1" fill="#000" fill-opacity="0.10"/><rect x="3" y="20" width="1" height="1" fill="#000" fill-opacity="0.45"/><rect x="3" y="21" width="1" height="1" fill="#000" fill-opacity="0.17"/><rect x="4" y="20" width="1" height="1" fill="#000" fill-opacity="0.45"/><rect x="4" y="21" width="1" height="1" fill="#000" fill-opacity="0.17"/><rect x="5" y="20" width="1" height="1" fill="#000" fill-opacity="0.45"/><rect x="5" y="21" width="1" height="1" fill="#000" fill-opacity="0.17"/><rect x="6" y="20" width="1" height="1" fill="#000" fill-opacity="0.20"/><rect x="6" y="21" width="1" height="1" fill="#000" fill-opacity="0.08"/><rect x="7" y="20" width="1" height="1" fill="#000" fill-opacity="0.45"/><rect x="7" y="21" width="1" height="1" fill="#000" fill-opacity="0.17"/><rect x="8" y="20" width="1" height="1" fill="#000" fill-opacity="0.45"/><rect x="8" y="21" width="1" height="1" fill="#000" fill-opacity="0.17"/><rect x="9" y="20" width="1" height="1" fill="#000" fill-opacity="0.45"/><rect x="9" y="21" width="1" height="1" fill="#000" fill-opacity="0.17"/><rect x="10" y="20" width="1" height="1" fill="#000" fill-opacity="0.45"/><rect x="10" y="21" width="1" height="1" fill="#000" fill-opacity="0.17"/><rect x="11" y="20" width="1" height="1" fill="#000" fill-opacity="0.45"/><rect x="11" y="21" width="1" height="1" fill="#000" fill-opacity="0.17"/><rect x="12" y="20" width="1" height="1" fill="#000" fill-opacity="0.27"/><rect x="12" y="21" width="1" height="1" fill="#000" fill-opacity="0.10"/><rect x="13" y="20" width="1" height="1" fill="#000" fill-opacity="0.20"/><rect x="13" y="21" width="1" height="1" fill="#000" fill-opacity="0.08"/><rect x="14" y="20" width="1" height="1" fill="#000" fill-opacity="0.27"/><rect x="14" y="21" width="1" height="1" fill="#000" fill-opacity="0.10"/><rect x="15" y="20" width="1" height="1" fill="#000" fill-opacity="0.45"/><rect x="15" y="21" width="1" height="1" fill="#000" fill-opacity="0.17"/><rect x="16" y="20" width="1" height="1" fill="#000" fill-opacity="0.45"/><rect x="16" y="21" width="1" height="1" fill="#000" fill-opacity="0.17"/><rect x="17" y="20" width="1" height="1" fill="#000" fill-opacity="0.20"/><rect x="17" y="21" width="1" height="1" fill="#000" fill-opacity="0.08"/><rect x="18" y="20" width="1" height="1" fill="#000" fill-opacity="0.50"/><rect x="18" y="21" width="1" height="1" fill="#000" fill-opacity="0.19"/><rect x="19" y="20" width="1" height="1" fill="#000" fill-opacity="0.50"/><rect x="19" y="21" width="1" height="1" fill="#000" fill-opacity="0.19"/><rect x="20" y="20" width="1" height="1" fill="#000" fill-opacity="0.45"/><rect x="20" y="21" width="1" height="1" fill="#000" fill-opacity="0.17"/><rect x="21" y="20" width="1" height="1" fill="#000" fill-opacity="0.27"/><rect x="21" y="21" width="1" height="1" fill="#000" fill-opacity="0.10"/><rect x="22" y="20" width="1" height="1" fill="#000" fill-opacity="0.20"/><rect x="22" y="21" width="1" height="1" fill="#000" fill-opacity="0.08"/><rect x="2" y="22" width="1" height="1" fill="#000" fill-opacity="0.27"/><rect x="2" y="23" width="1" height="1" fill="#000" fill-opacity="0.10"/><rect x="3" y="22" width="1" height="1" fill="#000" fill-opacity="0.45"/><rect x="3" y="23" width="1" height="1" fill="#000" fill-opacity="0.17"/><rect x="4" y="22" width="1" height="1" fill="#000" fill-opacity="0.45"/><rect x="4" y="23" width="1" height="1" fill="#000" fill-opacity="0.17"/><rect x="5" y="22" width="1" height="1" fill="#000" fill-opacity="0.45"/><rect x="5" y="23" width="1" height="1" fill="#000" fill-opacity="0.17"/><rect x="6" y="22" width="1" height="1" fill="#000" fill-opacity="0.20"/><rect x="6" y="23" width="1" height="1" fill="#000" fill-opacity="0.08"/><rect x="7" y="22" width="1" height="1" fill="#000" fill-opacity="0.45"/><rect x="7" y="23" width="1" height="1" fill="#000" fill-opacity="0.17"/><rect x="8" y="22" width="1" height="1" fill="#000" fill-opacity="0.45"/><rect x="8" y="23" width="1" height="1" fill="#000" fill-opacity="0.17"/><rect x="9" y="22" width="1" height="1" fill="#000" fill-opacity="0.45"/><rect x="9" y="23" width="1" height="1" fill="#000" fill-opacity="0.17"/><rect x="10" y="22" width="1" height="1" fill="#000" fill-opacity="0.45"/><rect x="10" y="23" width="1" height="1" fill="#000" fill-opacity="0.17"/><rect x="11" y="22" width="1" height="1" fill="#000" fill-opacity="0.45"/><rect x="11" y="23" width="1" height="1" fill="#000" fill-opacity="0.17"/><rect x="12" y="22" width="1" height="1" fill="#000" fill-opacity="0.27"/><rect x="12" y="23" width="1" height="1" fill="#000" fill-opacity="0.10"/><rect x="13" y="22" width="1" height="1" fill="#000" fill-opacity="0.20"/><rect x="13" y="23" width="1" height="1" fill="#000" fill-opacity="0.08"/><rect x="14" y="22" width="1" height="1" fill="#000" fill-opacity="0.27"/><rect x="14" y="23" width="1" height="1" fill="#000" fill-opacity="0.10"/><rect x="15" y="22" width="1" height="1" fill="#000" fill-opacity="0.45"/><rect x="15" y="23" width="1" height="1" fill="#000" fill-opacity="0.17"/><rect x="16" y="22" width="1" height="1" fill="#000" fill-opacity="0.45"/><rect x="16" y="23" width="1" height="1" fill="#000" fill-opacity="0.17"/><rect x="17" y="22" width="1" height="1" fill="#000" fill-opacity="0.20"/><rect x="17" y="23" width="1" height="1" fill="#000" fill-opacity="0.08"/><rect x="18" y="22" width="1" height="1" fill="#000" fill-opacity="0.50"/><rect x="18" y="23" width="1" height="1" fill="#000" fill-opacity="0.19"/><rect x="19" y="22" width="1" height="1" fill="#000" fill-opacity="0.50"/><rect x="19" y="23" width="1" height="1" fill="#000" fill-opacity="0.19"/><rect x="20" y="22" width="1" height="1" fill="#000" fill-opacity="0.50"/><rect x="20" y="23" width="1" height="1" fill="#000" fill-opacity="0.19"/><rect x="21" y="22" width="1" height="1" fill="#000" fill-opacity="0.45"/><rect x="21" y="23" width="1" height="1" fill="#000" fill-opacity="0.17"/><rect x="22" y="22" width="1" height="1" fill="#000" fill-opacity="0.27"/><rect x="22" y="23" width="1" height="1" fill="#000" fill-opacity="0.10"/><rect x="23" y="22" width="1" height="1" fill="#000" fill-opacity="0.20"/><rect x="23" y="23" width="1" height="1" fill="#000" fill-opacity="0.08"/><rect x="2" y="24" width="1" height="1" fill="#000" fill-opacity="0.27"/><rect x="2" y="25" width="1" height="1" fill="#000" fill-opacity="0.10"/><rect x="3" y="24" width="1" height="1" fill="#000" fill-opacity="0.45"/><rect x="3" y="25" width="1" height="1" fill="#000" fill-opacity="0.17"/><rect x="4" y="24" width="1" height="1" fill="#000" fill-opacity="0.45"/><rect x="4" y="25" width="1" height="1" fill="#000" fill-opacity="0.17"/><rect x="5" y="24" width="1" height="1" fill="#000" fill-opacity="0.45"/><rect x="5" y="25" width="1" height="1" fill="#000" fill-opacity="0.17"/><rect x="6" y="24" width="1" height="1" fill="#000" fill-opacity="0.20"/><rect x="6" y="25" width="1" height="1" fill="#000" fill-opacity="0.08"/><rect x="7" y="24" width="1" height="1" fill="#000" fill-opacity="0.45"/><rect x="7" y="25" width="1" height="1" fill="#000" fill-opacity="0.17"/><rect x="8" y="24" width="1" height="1" fill="#000" fill-opacity="0.45"/><rect x="8" y="25" width="1" height="1" fill="#000" fill-opacity="0.17"/><rect x="9" y="24" width="1" height="1" fill="#000" fill-opacity="0.45"/><rect x="9" y="25" width="1" height="1" fill="#000" fill-opacity="0.17"/><rect x="10" y="24" width="1" height="1" fill="#000" fill-opacity="0.45"/><rect x="10" y="25" width="1" height="1" fill="#000" fill-opacity="0.17"/><rect x="11" y="24" width="1" height="1" fill="#000" fill-opacity="0.45"/><rect x="11" y="25" width="1" height="1" fill="#000" fill-opacity="0.17"/><rect x="12" y="24" width="1" height="1" fill="#000" fill-opacity="0.27"/><rect x="12" y="25" width="1" height="1" fill="#000" fill-opacity="0.10"/><rect x="13" y="24" width="1" height="1" fill="#000" fill-opacity="0.20"/><rect x="13" y="25" width="1" height="1" fill="#000" fill-opacity="0.08"/><rect x="14" y="24" width="1" height="1" fill="#000" fill-opacity="0.27"/><rect x="14" y="25" width="1" height="1" fill="#000" fill-opacity="0.10"/><rect x="15" y="24" width="1" height="1" fill="#000" fill-opacity="0.45"/><rect x="15" y="25" width="1" height="1" fill="#000" fill-opacity="0.17"/><rect x="16" y="24" width="1" height="1" fill="#000" fill-opacity="0.45"/><rect x="16" y="25" width="1" height="1" fill="#000" fill-opacity="0.17"/><rect x="17" y="24" width="1" height="1" fill="#000" fill-opacity="0.20"/><rect x="17" y="25" width="1" height="1" fill="#000" fill-opacity="0.08"/><rect x="18" y="24" width="1" height="1" fill="#000" fill-opacity="0.50"/><rect x="18" y="25" width="1" height="1" fill="#000" fill-opacity="0.19"/><rect x="19" y="24" width="1" height="1" fill="#000" fill-opacity="0.45"/><rect x="19" y="25" width="1" height="1" fill="#000" fill-opacity="0.17"/><rect x="20" y="24" width="1" height="1" fill="#000" fill-opacity="0.27"/><rect x="20" y="25" width="1" height="1" fill="#000" fill-opacity="0.10"/><rect x="21" y="24" width="1" height="1" fill="#000" fill-opacity="0.20"/><rect x="21" y="25" width="1" height="1" fill="#000" fill-opacity="0.08"/><rect x="2" y="26" width="1" height="1" fill="#000" fill-opacity="0.27"/><rect x="2" y="27" width="1" height="1" fill="#000" fill-opacity="0.10"/><rect x="3" y="26" width="1" height="1" fill="#000" fill-opacity="0.45"/><rect x="3" y="27" width="1" height="1" fill="#000" fill-opacity="0.17"/><rect x="4" y="26" width="1" height="1" fill="#000" fill-opacity="0.45"/><rect x="4" y="27" width="1" height="1" fill="#000" fill-opacity="0.17"/><rect x="5" y="26" width="1" height="1" fill="#000" fill-opacity="0.45"/><rect x="5" y="27" width="1" height="1" fill="#000" fill-opacity="0.17"/><rect x="6" y="26" width="1" height="1" fill="#000" fill-opacity="0.20"/><rect x="6" y="27" width="1" height="1" fill="#000" fill-opacity="0.08"/><rect x="7" y="26" width="1" height="1" fill="#000" fill-opacity="0.45"/><rect x="7" y="27" width="1" height="1" fill="#000" fill-opacity="0.17"/><rect x="8" y="26" width="1" height="1" fill="#000" fill-opacity="0.45"/><rect x="8" y="27" width="1" height="1" fill="#000" fill-opacity="0.17"/><rect x="9" y="26" width="1" height="1" fill="#000" fill-opacity="0.45"/><rect x="9" y="27" width="1" height="1" fill="#000" fill-opacity="0.17"/><rect x="10" y="26" width="1" height="1" fill="#000" fill-opacity="0.45"/><rect x="10" y="27" width="1" height="1" fill="#000" fill-opacity="0.17"/><rect x="11" y="26" width="1" height="1" fill="#000" fill-opacity="0.45"/><rect x="11" y="27" width="1" height="1" fill="#000" fill-opacity="0.17"/><rect x="12" y="26" width="1" height="1" fill="#000" fill-opacity="0.27"/><rect x="12" y="27" width="1" height="1" fill="#000" fill-opacity="0.10"/><rect x="13" y="26" width="1" height="1" fill="#000" fill-opacity="0.20"/><rect x="13" y="27" width="1" height="1" fill="#000" fill-opacity="0.08"/><rect x="14" y="26" width="1" height="1" fill="#000" fill-opacity="0.27"/><rect x="14" y="27" width="1" height="1" fill="#000" fill-opacity="0.10"/><rect x="15" y="26" width="1" height="1" fill="#000" fill-opacity="0.45"/><rect x="15" y="27" width="1" height="1" fill="#000" fill-opacity="0.17"/><rect x="16" y="26" width="1" height="1" fill="#000" fill-opacity="0.45"/><rect x="16" y="27" width="1" height="1" fill="#000" fill-opacity="0.17"/><rect x="17" y="26" width="1" height="1" fill="#000" fill-opacity="0.20"/><rect x="17" y="27" width="1" height="1" fill="#000" fill-opacity="0.08"/><rect x="18" y="26" width="1" height="1" fill="#000" fill-opacity="0.50"/><rect x="18" y="27" width="1" height="1" fill="#000" fill-opacity="0.19"/><rect x="19" y="26" width="1" height="1" fill="#000" fill-opacity="0.50"/><rect x="19" y="27" width="1" height="1" fill="#000" fill-opacity="0.19"/><rect x="20" y="26" width="1" height="1" fill="#000" fill-opacity="0.45"/><rect x="20" y="27" width="1" height="1" fill="#000" fill-opacity="0.17"/><rect x="21" y="26" width="1" height="1" fill="#000" fill-opacity="0.27"/><rect x="21" y="27" width="1" height="1" fill="#000" fill-opacity="0.10"/><rect x="22" y="26" width="1" height="1" fill="#000" fill-opacity="0.20"/><rect x="22" y="27" width="1" height="1" fill="#000" fill-opacity="0.08"/><rect x="2" y="28" width="1" height="1" fill="#000" fill-opacity="0.27"/><rect x="2" y="29" width="1" height="1" fill="#000" fill-opacity="0.10"/><rect x="3" y="28" width="1" height="1" fill="#000" fill-opacity="0.45"/><rect x="3" y="29" width="1" height="1" fill="#000" fill-opacity="0.17"/><rect x="4" y="28" width="1" height="1" fill="#000" fill-opacity="0.45"/><rect x="4" y="29" width="1" height="1" fill="#000" fill-opacity="0.17"/><rect x="5" y="28" width="1" height="1" fill="#000" fill-opacity="0.45"/><rect x="5" y="29" width="1" height="1" fill="#000" fill-opacity="0.17"/><rect x="6" y="28" width="1" height="1" fill="#000" fill-opacity="0.20"/><rect x="6" y="29" width="1" height="1" fill="#000" fill-opacity="0.08"/><rect x="7" y="28" width="1" height="1" fill="#000" fill-opacity="0.45"/><rect x="7" y="29" width="1" height="1" fill="#000" fill-opacity="0.17"/><rect x="8" y="28" width="1" height="1" fill="#000" fill-opacity="0.45"/><rect x="8" y="29" width="1" height="1" fill="#000" fill-opacity="0.17"/><rect x="9" y="28" width="1" height="1" fill="#000" fill-opacity="0.45"/><rect x="9" y="29" width="1" height="1" fill="#000" fill-opacity="0.17"/><rect x="10" y="28" width="1" height="1" fill="#000" fill-opacity="0.45"/><rect x="10" y="29" width="1" height="1" fill="#000" fill-opacity="0.17"/><rect x="11" y="28" width="1" height="1" fill="#000" fill-opacity="0.45"/><rect x="11" y="29" width="1" height="1" fill="#000" fill-opacity="0.17"/><rect x="12" y="28" width="1" height="1" fill="#000" fill-opacity="0.27"/><rect x="12" y="29" width="1" height="1" fill="#000" fill-opacity="0.10"/><rect x="13" y="28" width="1" height="1" fill="#000" fill-opacity="0.20"/><rect x="13" y="29" width="1" height="1" fill="#000" fill-opacity="0.08"/><rect x="14" y="28" width="1" height="1" fill="#000" fill-opacity="0.27"/><rect x="14" y="29" width="1" height="1" fill="#000" fill-opacity="0.10"/><rect x="15" y="28" width="1" height="1" fill="#000" fill-opacity="0.45"/><rect x="15" y="29" width="1" height="1" fill="#000" fill-opacity="0.17"/><rect x="16" y="28" width="1" height="1" fill="#000" fill-opacity="0.45"/><rect x="16" y="29" width="1" height="1" fill="#000" fill-opacity="0.17"/><rect x="17" y="28" width="1" height="1" fill="#000" fill-opacity="0.20"/><rect x="17" y="29" width="1" height="1" fill="#000" fill-opacity="0.08"/><rect x="18" y="28" width="1" height="1" fill="#000" fill-opacity="0.50"/><rect x="18" y="29" width="1" height="1" fill="#000" fill-opacity="0.19"/><rect x="19" y="28" width="1" height="1" fill="#000" fill-opacity="0.50"/><rect x="19" y="29" width="1" height="1" fill="#000" fill-opacity="0.19"/><rect x="20" y="28" width="1" height="1" fill="#000" fill-opacity="0.50"/><rect x="20" y="29" width="1" height="1" fill="#000" fill-opacity="0.19"/><rect x="21" y="28" width="1" height="1" fill="#000" fill-opacity="0.45"/><rect x="21" y="29" width="1" height="1" fill="#000" fill-opacity="0.17"/><rect x="22" y="28" width="1" height="1" fill="#000" fill-opacity="0.27"/><rect x="22" y="29" width="1" height="1" fill="#000" fill-opacity="0.10"/><rect x="23" y="28" width="1" height="1" fill="#000" fill-opacity="0.20"/><rect x="23" y="29" width="1" height="1" fill="#000" fill-opacity="0.08"/><rect x="2" y="30" width="1" height="1" fill="#000" fill-opacity="0.27"/><rect x="2" y="31" width="1" height="1" fill="#000" fill-opacity="0.10"/><rect x="3" y="30" width="1" height="1" fill="#000" fill-opacity="0.45"/><rect x="3" y="31" width="1" height="1" fill="#000" fill-opacity="0.17"/><rect x="4" y="30" width="1" height="1" fill="#000" fill-opacity="0.45"/><rect x="4" y="31" width="1" height="1" fill="#000" fill-opacity="0.17"/><rect x="5" y="30" width="1" height="1" fill="#000" fill-opacity="0.45"/><rect x="5" y="31" width="1" height="1" fill="#000" fill-opacity="0.17"/><rect x="6" y="30" width="1" height="1" fill="#000" fill-opacity="0.20"/><rect x="6" y="31" width="1" height="1" fill="#000" fill-opacity="0.08"/><rect x="7" y="30" width="1" height="1" fill="#000" fill-opacity="0.45"/><rect x="7" y="31" width="1" height="1" fill="#000" fill-opacity="0.17"/><rect x="8" y="30" width="1" height="1" fill="#000" fill-opacity="0.45"/><rect x="8" y="31" width="1" height="1" fill="#000" fill-opacity="0.17"/><rect x="9" y="30" width="1" height="1" fill="#000" fill-opacity="0.45"/><rect x="9" y="31" width="1" height="1" fill="#000" fill-opacity="0.17"/><rect x="10" y="30" width="1" height="1" fill="#000" fill-opacity="0.45"/><rect x="10" y="31" width="1" height="1" fill="#000" fill-opacity="0.17"/><rect x="11" y="30" width="1" height="1" fill="#000" fill-opacity="0.45"/><rect x="11" y="31" width="1" height="1" fill="#000" fill-opacity="0.17"/><rect x="12" y="30" width="1" height="1" fill="#000" fill-opacity="0.27"/><rect x="12" y="31" width="1" height="1" fill="#000" fill-opacity="0.10"/><rect x="13" y="30" width="1" height="1" fill="#000" fill-opacity="0.20"/><rect x="13" y="31" width="1" height="1" fill="#000" fill-opacity="0.08"/><rect x="14" y="30" width="1" height="1" fill="#000" fill-opacity="0.27"/><rect x="14" y="31" width="1" height="1" fill="#000" fill-opacity="0.10"/><rect x="15" y="30" width="1" height="1" fill="#000" fill-opacity="0.45"/><rect x="15" y="31" width="1" height="1" fill="#000" fill-opacity="0.17"/><rect x="16" y="30" width="1" height="1" fill="#000" fill-opacity="0.45"/><rect x="16" y="31" width="1" height="1" fill="#000" fill-opacity="0.17"/><rect x="17" y="30" width="1" height="1" fill="#000" fill-opacity="0.20"/><rect x="17" y="31" width="1" height="1" fill="#000" fill-opacity="0.08"/><rect x="18" y="30" width="1" height="1" fill="#000" fill-opacity="0.50"/><rect x="18" y="31" width="1" height="1" fill="#000" fill-opacity="0.19"/><rect x="19" y="30" width="1" height="1" fill="#000" fill-opacity="0.45"/><rect x="19" y="31" width="1" height="1" fill="#000" fill-opacity="0.17"/><rect x="20" y="30" width="1" height="1" fill="#000" fill-opacity="0.27"/><rect x="20" y="31" width="1" height="1" fill="#000" fill-opacity="0.10"/><rect x="0" y="32" width="1" height="1" fill="#5a0af5" fill-opacity="0.70"/><rect x="0" y="33" width="1" height="1" fill="#5a0af5" fill-opacity="0.27"/><rect x="1" y="32" width="1" height="1" fill="#5a0af5" fill-opacity="0.70"/><rect x="1" y="33" width="1" height="1" fill="#5a0af5" fill-opacity="0.27"/><rect x="2" y="32" width="1" height="1" fill="#5a0af5" fill-opacity="0.70"/><rect x="2" y="33" width="1" height="1" fill="#5a0af5" fill-opacity="0.27"/><rect x="3" y="32" width="1" height="1" fill="#5a0af5" fill-opacity="0.70"/><rect x="3" y="33" width="1" height="1" fill="#5a0af5" fill-opacity="0.27"/><rect x="2" y="34" width="1" height="1" fill="#000" fill-opacity="0.27"/><rect x="2" y="35" width="1" height="1" fill="#000" fill-opacity="0.10"/><rect x="3" y="34" width="1" height="1" fill="#000" fill-opacity="0.45"/><rect x="3" y="35" width="1" height="1" fill="#000" fill-opacity="0.17"/><rect x="4" y="34" width="1" height="1" fill="#000" fill-opacity="0.45"/><rect x="4" y="35" width="1" height="1" fill="#000" fill-opacity="0.17"/><rect x="5" y="34" width="1" height="1" fill="#000" fill-opacity="0.45"/><rect x="5" y="35" width="1" height="1" fill="#000" fill-opacity="0.17"/><rect x="6" y="34" width="1" height="1" fill="#000" fill-opacity="0.45"/><rect x="6" y="35" width="1" height="1" fill="#000" fill-opacity="0.17"/><rect x="7" y="34" width="1" height="1" fill="#000" fill-opacity="0.45"/><rect x="7" y="35" width="1" height="1" fill="#000" fill-opacity="0.17"/><rect x="8" y="34" width="1" height="1" fill="#000" fill-opacity="0.45"/><rect x="8" y="35" width="1" height="1" fill="#000" fill-opacity="0.17"/><rect x="9" y="34" width="1" height="1" fill="#000" fill-opacity="0.56"/><rect x="9" y="35" width="1" height="1" fill="#000" fill-opacity="0.22"/><rect x="10" y="34" width="1" height="1" fill="#000" fill-opacity="0.50"/><rect x="10" y="35" width="1" height="1" fill="#000" fill-opacity="0.19"/><rect x="11" y="34" width="1" height="1" fill="#000" fill-opacity="0.27"/><rect x="11" y="35" width="1" height="1" fill="#000" fill-opacity="0.10"/><rect x="12" y="34" width="1" height="1" fill="#000" fill-opacity="0.20"/><rect x="12" y="35" width="1" height="1" fill="#000" fill-opacity="0.08"/><rect x="13" y="34" width="1" height="1" fill="#000" fill-opacity="0.45"/><rect x="13" y="35" width="1" height="1" fill="#000" fill-opacity="0.17"/><rect x="14" y="34" width="1" height="1" fill="#000" fill-opacity="0.45"/><rect x="14" y="35" width="1" height="1" fill="#000" fill-opacity="0.17"/><rect x="15" y="34" width="1" height="1" fill="#000" fill-opacity="0.45"/><rect x="15" y="35" width="1" height="1" fill="#000" fill-opacity="0.17"/><rect x="16" y="34" width="1" height="1" fill="#000" fill-opacity="0.56"/><rect x="16" y="35" width="1" height="1" fill="#000" fill-opacity="0.22"/><rect x="17" y="34" width="1" height="1" fill="#000" fill-opacity="0.45"/><rect x="17" y="35" width="1" height="1" fill="#000" fill-opacity="0.17"/><rect x="18" y="34" width="1" height="1" fill="#000" fill-opacity="0.45"/><rect x="18" y="35" width="1" height="1" fill="#000" fill-opacity="0.17"/><rect x="19" y="34" width="1" height="1" fill="#000" fill-opacity="0.45"/><rect x="19" y="35" width="1" height="1" fill="#000" fill-opacity="0.17"/><rect x="20" y="34" width="1" height="1" fill="#000" fill-opacity="0.45"/><rect x="20" y="35" width="1" height="1" fill="#000" fill-opacity="0.17"/><rect x="22" y="34" width="1" height="1" fill="#5a0af5" fill-opacity="0.39"/><rect x="22" y="35" width="1" height="1" fill="#5a0af5" fill-opacity="0.15"/><rect x="23" y="34" width="1" height="1" fill="#ee3b2a" fill-opacity="0.34"/><rect x="23" y="35" width="1" height="1" fill="#ee3b2a" fill-opacity="0.13"/><rect x="24" y="34" width="1" height="1" fill="#ee3b2a" fill-opacity="0.56"/><rect x="24" y="35" width="1" height="1" fill="#ee3b2a" fill-opacity="0.22"/><rect x="25" y="34" width="1" height="1" fill="#ee3b2a" fill-opacity="0.56"/><rect x="25" y="35" width="1" height="1" fill="#ee3b2a" fill-opacity="0.22"/><rect x="26" y="34" width="1" height="1" fill="#ee3b2a" fill-opacity="0.56"/><rect x="26" y="35" width="1" height="1" fill="#ee3b2a" fill-opacity="0.22"/><rect x="27" y="34" width="1" height="1" fill="#ee3b2a" fill-opacity="0.56"/><rect x="27" y="35" width="1" height="1" fill="#ee3b2a" fill-opacity="0.22"/><rect x="28" y="34" width="1" height="1" fill="#ee3b2a" fill-opacity="0.56"/><rect x="28" y="35" width="1" height="1" fill="#ee3b2a" fill-opacity="0.22"/><rect x="29" y="34" width="1" height="1" fill="#ee3b2a" fill-opacity="0.56"/><rect x="29" y="35" width="1" height="1" fill="#ee3b2a" fill-opacity="0.22"/><rect x="30" y="34" width="1" height="1" fill="#ee3b2a" fill-opacity="0.25"/><rect x="30" y="35" width="1" height="1" fill="#ee3b2a" fill-opacity="0.10"/><rect x="31" y="34" width="1" height="1" fill="#ee3b2a" fill-opacity="0.56"/><rect x="31" y="35" width="1" height="1" fill="#ee3b2a" fill-opacity="0.22"/><rect x="32" y="34" width="1" height="1" fill="#ee3b2a" fill-opacity="0.56"/><rect x="32" y="35" width="1" height="1" fill="#ee3b2a" fill-opacity="0.22"/><rect x="33" y="34" width="1" height="1" fill="#ee3b2a" fill-opacity="0.56"/><rect x="33" y="35" width="1" height="1" fill="#ee3b2a" fill-opacity="0.22"/><rect x="34" y="34" width="1" height="1" fill="#ee3b2a" fill-opacity="0.34"/><rect x="34" y="35" width="1" height="1" fill="#ee3b2a" fill-opacity="0.13"/><rect x="35" y="34" width="1" height="1" fill="#5a0af5" fill-opacity="0.39"/><rect x="35" y="35" width="1" height="1" fill="#5a0af5" fill-opacity="0.15"/><rect x="37" y="34" width="1" height="1" fill="#000" fill-opacity="0.45"/><rect x="37" y="35" width="1" height="1" fill="#000" fill-opacity="0.17"/><rect x="38" y="34" width="1" height="1" fill="#000" fill-opacity="0.20"/><rect x="38" y="35" width="1" height="1" fill="#000" fill-opacity="0.08"/><rect x="2" y="36" width="1" height="1" fill="#000" fill-opacity="0.56"/><rect x="2" y="37" width="1" height="1" fill="#000" fill-opacity="0.22"/><rect x="3" y="36" width="1" height="1" fill="#000" fill-opacity="0.56"/><rect x="3" y="37" width="1" height="1" fill="#000" fill-opacity="0.22"/><rect x="4" y="36" width="1" height="1" fill="#000" fill-opacity="0.56"/><rect x="4" y="37" width="1" height="1" fill="#000" fill-opacity="0.22"/><rect x="5" y="36" width="1" height="1" fill="#000" fill-opacity="0.56"/><rect x="5" y="37" width="1" height="1" fill="#000" fill-opacity="0.22"/><rect x="6" y="36" width="1" height="1" fill="#000" fill-opacity="0.56"/><rect x="6" y="37" width="1" height="1" fill="#000" fill-opacity="0.22"/><rect x="7" y="36" width="1" height="1" fill="#000" fill-opacity="0.56"/><rect x="7" y="37" width="1" height="1" fill="#000" fill-opacity="0.22"/><rect x="8" y="36" width="1" height="1" fill="#000" fill-opacity="0.56"/><rect x="8" y="37" width="1" height="1" fill="#000" fill-opacity="0.22"/><rect x="9" y="36" width="1" height="1" fill="#000" fill-opacity="0.56"/><rect x="9" y="37" width="1" height="1" fill="#000" fill-opacity="0.22"/><rect x="10" y="36" width="1" height="1" fill="#000" fill-opacity="0.56"/><rect x="10" y="37" width="1" height="1" fill="#000" fill-opacity="0.22"/><rect x="12" y="36" width="1" height="1" fill="#5a0af5" fill-opacity="0.39"/><rect x="12" y="37" width="1" height="1" fill="#5a0af5" fill-opacity="0.15"/><rect x="4" y="38" width="1" height="1" fill="#000" fill-opacity="0.45"/><rect x="4" y="39" width="1" height="1" fill="#000" fill-opacity="0.17"/><rect x="5" y="38" width="1" height="1" fill="#000" fill-opacity="0.45"/><rect x="5" y="39" width="1" height="1" fill="#000" fill-opacity="0.17"/><rect x="6" y="38" width="1" height="1" fill="#000" fill-opacity="0.20"/><rect x="6" y="39" width="1" height="1" fill="#000" fill-opacity="0.08"/><rect x="7" y="38" width="1" height="1" fill="#000" fill-opacity="0.45"/><rect x="7" y="39" width="1" height="1" fill="#000" fill-opacity="0.17"/><rect x="8" y="38" width="1" height="1" fill="#000" fill-opacity="0.45"/><rect x="8" y="39" width="1" height="1" fill="#000" fill-opacity="0.17"/><rect x="9" y="38" width="1" height="1" fill="#000" fill-opacity="0.45"/><rect x="9" y="39" width="1" height="1" fill="#000" fill-opacity="0.17"/><rect x="10" y="38" width="1" height="1" fill="#000" fill-opacity="0.45"/><rect x="10" y="39" width="1" height="1" fill="#000" fill-opacity="0.17"/><rect x="11" y="38" width="1" height="1" fill="#000" fill-opacity="0.45"/><rect x="11" y="39" width="1" height="1" fill="#000" fill-opacity="0.17"/><rect x="13" y="38" width="1" height="1" fill="#2f9a55" fill-opacity="0.39"/><rect x="13" y="39" width="1" height="1" fill="#2f9a55" fill-opacity="0.15"/><rect x="14" y="38" width="1" height="1" fill="#000" fill-opacity="0.45"/><rect x="14" y="39" width="1" height="1" fill="#000" fill-opacity="0.17"/><rect x="15" y="38" width="1" height="1" fill="#000" fill-opacity="0.20"/><rect x="15" y="39" width="1" height="1" fill="#000" fill-opacity="0.08"/><rect x="16" y="38" width="1" height="1" fill="#5a0af5" fill-opacity="0.56"/><rect x="16" y="39" width="1" height="1" fill="#5a0af5" fill-opacity="0.22"/><rect x="17" y="38" width="1" height="1" fill="#5a0af5" fill-opacity="0.56"/><rect x="17" y="39" width="1" height="1" fill="#5a0af5" fill-opacity="0.22"/><rect x="18" y="38" width="1" height="1" fill="#5a0af5" fill-opacity="0.56"/><rect x="18" y="39" width="1" height="1" fill="#5a0af5" fill-opacity="0.22"/><rect x="19" y="38" width="1" height="1" fill="#5a0af5" fill-opacity="0.56"/><rect x="19" y="39" width="1" height="1" fill="#5a0af5" fill-opacity="0.22"/><rect x="20" y="38" width="1" height="1" fill="#000" fill-opacity="0.20"/><rect x="20" y="39" width="1" height="1" fill="#000" fill-opacity="0.08"/><rect x="22" y="38" width="1" height="1" fill="#ee3b2a" fill-opacity="0.34"/><rect x="22" y="39" width="1" height="1" fill="#ee3b2a" fill-opacity="0.13"/><rect x="23" y="38" width="1" height="1" fill="#ee3b2a" fill-opacity="0.70"/><rect x="23" y="39" width="1" height="1" fill="#ee3b2a" fill-opacity="0.27"/><rect x="24" y="38" width="1" height="1" fill="#ee3b2a" fill-opacity="0.70"/><rect x="24" y="39" width="1" height="1" fill="#ee3b2a" fill-opacity="0.27"/><rect x="25" y="38" width="1" height="1" fill="#ee3b2a" fill-opacity="0.70"/><rect x="25" y="39" width="1" height="1" fill="#ee3b2a" fill-opacity="0.27"/><rect x="26" y="38" width="1" height="1" fill="#ee3b2a" fill-opacity="0.39"/><rect x="26" y="39" width="1" height="1" fill="#ee3b2a" fill-opacity="0.15"/><rect x="27" y="38" width="1" height="1" fill="#ee3b2a" fill-opacity="0.62"/><rect x="27" y="39" width="1" height="1" fill="#ee3b2a" fill-opacity="0.24"/><rect x="28" y="38" width="1" height="1" fill="#ee3b2a" fill-opacity="0.34"/><rect x="28" y="39" width="1" height="1" fill="#ee3b2a" fill-opacity="0.13"/><rect x="29" y="38" width="1" height="1" fill="#2f9a55" fill-opacity="0.39"/><rect x="29" y="39" width="1" height="1" fill="#2f9a55" fill-opacity="0.15"/><rect x="31" y="38" width="1" height="1" fill="#000" fill-opacity="0.56"/><rect x="31" y="39" width="1" height="1" fill="#000" fill-opacity="0.22"/><rect x="32" y="38" width="1" height="1" fill="#000" fill-opacity="0.56"/><rect x="32" y="39" width="1" height="1" fill="#000" fill-opacity="0.22"/><rect x="33" y="38" width="1" height="1" fill="#000" fill-opacity="0.56"/><rect x="33" y="39" width="1" height="1" fill="#000" fill-opacity="0.22"/><rect x="34" y="38" width="1" height="1" fill="#000" fill-opacity="0.56"/><rect x="34" y="39" width="1" height="1" fill="#000" fill-opacity="0.22"/><rect x="35" y="38" width="1" height="1" fill="#000" fill-opacity="0.56"/><rect x="35" y="39" width="1" height="1" fill="#000" fill-opacity="0.22"/><rect x="36" y="38" width="1" height="1" fill="#000" fill-opacity="0.56"/><rect x="36" y="39" width="1" height="1" fill="#000" fill-opacity="0.22"/><rect x="37" y="38" width="1" height="1" fill="#000" fill-opacity="0.56"/><rect x="37" y="39" width="1" height="1" fill="#000" fill-opacity="0.22"/><rect x="39" y="38" width="1" height="1" fill="#000" fill-opacity="0.27"/><rect x="39" y="39" width="1" height="1" fill="#000" fill-opacity="0.10"/><rect x="40" y="38" width="1" height="1" fill="#000" fill-opacity="0.45"/><rect x="40" y="39" width="1" height="1" fill="#000" fill-opacity="0.17"/><rect x="41" y="38" width="1" height="1" fill="#000" fill-opacity="0.45"/><rect x="41" y="39" width="1" height="1" fill="#000" fill-opacity="0.17"/><rect x="42" y="38" width="1" height="1" fill="#000" fill-opacity="0.45"/><rect x="42" y="39" width="1" height="1" fill="#000" fill-opacity="0.17"/><rect x="43" y="38" width="1" height="1" fill="#000" fill-opacity="0.45"/><rect x="43" y="39" width="1" height="1" fill="#000" fill-opacity="0.17"/><rect x="44" y="38" width="1" height="1" fill="#000" fill-opacity="0.45"/><rect x="44" y="39" width="1" height="1" fill="#000" fill-opacity="0.17"/><rect x="45" y="38" width="1" height="1" fill="#000" fill-opacity="0.45"/><rect x="45" y="39" width="1" height="1" fill="#000" fill-opacity="0.17"/><rect x="46" y="38" width="1" height="1" fill="#000" fill-opacity="0.45"/><rect x="46" y="39" width="1" height="1" fill="#000" fill-opacity="0.17"/><rect x="47" y="38" width="1" height="1" fill="#000" fill-opacity="0.27"/><rect x="47" y="39" width="1" height="1" fill="#000" fill-opacity="0.10"/><rect x="49" y="38" width="1" height="1" fill="#5a0af5" fill-opacity="0.70"/><rect x="49" y="39" width="1" height="1" fill="#5a0af5" fill-opacity="0.27"/><rect x="50" y="38" width="1" height="1" fill="#5a0af5" fill-opacity="0.70"/><rect x="50" y="39" width="1" height="1" fill="#5a0af5" fill-opacity="0.27"/><rect x="51" y="38" width="1" height="1" fill="#5a0af5" fill-opacity="0.70"/><rect x="51" y="39" width="1" height="1" fill="#5a0af5" fill-opacity="0.27"/><rect x="52" y="38" width="1" height="1" fill="#5a0af5" fill-opacity="0.70"/><rect x="52" y="39" width="1" height="1" fill="#5a0af5" fill-opacity="0.27"/><rect x="53" y="38" width="1" height="1" fill="#5a0af5" fill-opacity="0.70"/><rect x="53" y="39" width="1" height="1" fill="#5a0af5" fill-opacity="0.27"/><rect x="54" y="38" width="1" height="1" fill="#5a0af5" fill-opacity="0.70"/><rect x="54" y="39" width="1" height="1" fill="#5a0af5" fill-opacity="0.27"/><rect x="55" y="38" width="1" height="1" fill="#5a0af5" fill-opacity="0.70"/><rect x="55" y="39" width="1" height="1" fill="#5a0af5" fill-opacity="0.27"/><rect x="56" y="38" width="1" height="1" fill="#000" fill-opacity="0.20"/><rect x="56" y="39" width="1" height="1" fill="#000" fill-opacity="0.08"/><rect x="4" y="40" width="1" height="1" fill="#000" fill-opacity="0.27"/><rect x="4" y="41" width="1" height="1" fill="#000" fill-opacity="0.10"/><rect x="5" y="40" width="1" height="1" fill="#000" fill-opacity="0.45"/><rect x="5" y="41" width="1" height="1" fill="#000" fill-opacity="0.17"/><rect x="6" y="40" width="1" height="1" fill="#000" fill-opacity="0.45"/><rect x="6" y="41" width="1" height="1" fill="#000" fill-opacity="0.17"/><rect x="7" y="40" width="1" height="1" fill="#000" fill-opacity="0.45"/><rect x="7" y="41" width="1" height="1" fill="#000" fill-opacity="0.17"/><rect x="8" y="40" width="1" height="1" fill="#000" fill-opacity="0.45"/><rect x="8" y="41" width="1" height="1" fill="#000" fill-opacity="0.17"/><rect x="9" y="40" width="1" height="1" fill="#000" fill-opacity="0.45"/><rect x="9" y="41" width="1" height="1" fill="#000" fill-opacity="0.17"/><rect x="10" y="40" width="1" height="1" fill="#000" fill-opacity="0.45"/><rect x="10" y="41" width="1" height="1" fill="#000" fill-opacity="0.17"/><rect x="11" y="40" width="1" height="1" fill="#000" fill-opacity="0.45"/><rect x="11" y="41" width="1" height="1" fill="#000" fill-opacity="0.17"/><rect x="12" y="40" width="1" height="1" fill="#000" fill-opacity="0.45"/><rect x="12" y="41" width="1" height="1" fill="#000" fill-opacity="0.17"/><rect x="13" y="40" width="1" height="1" fill="#000" fill-opacity="0.45"/><rect x="13" y="41" width="1" height="1" fill="#000" fill-opacity="0.17"/><rect x="14" y="40" width="1" height="1" fill="#000" fill-opacity="0.45"/><rect x="14" y="41" width="1" height="1" fill="#000" fill-opacity="0.17"/><rect x="15" y="40" width="1" height="1" fill="#000" fill-opacity="0.27"/><rect x="15" y="41" width="1" height="1" fill="#000" fill-opacity="0.10"/><rect x="17" y="40" width="1" height="1" fill="#5a0af5" fill-opacity="0.70"/><rect x="17" y="41" width="1" height="1" fill="#5a0af5" fill-opacity="0.27"/><rect x="18" y="40" width="1" height="1" fill="#5a0af5" fill-opacity="0.70"/><rect x="18" y="41" width="1" height="1" fill="#5a0af5" fill-opacity="0.27"/><rect x="19" y="40" width="1" height="1" fill="#5a0af5" fill-opacity="0.70"/><rect x="19" y="41" width="1" height="1" fill="#5a0af5" fill-opacity="0.27"/><rect x="20" y="40" width="1" height="1" fill="#5a0af5" fill-opacity="0.70"/><rect x="20" y="41" width="1" height="1" fill="#5a0af5" fill-opacity="0.27"/><rect x="21" y="40" width="1" height="1" fill="#5a0af5" fill-opacity="0.70"/><rect x="21" y="41" width="1" height="1" fill="#5a0af5" fill-opacity="0.27"/><rect x="22" y="40" width="1" height="1" fill="#5a0af5" fill-opacity="0.70"/><rect x="22" y="41" width="1" height="1" fill="#5a0af5" fill-opacity="0.27"/><rect x="23" y="40" width="1" height="1" fill="#5a0af5" fill-opacity="0.70"/><rect x="23" y="41" width="1" height="1" fill="#5a0af5" fill-opacity="0.27"/><rect x="24" y="40" width="1" height="1" fill="#000" fill-opacity="0.20"/><rect x="24" y="41" width="1" height="1" fill="#000" fill-opacity="0.08"/><rect x="4" y="42" width="1" height="1" fill="#000" fill-opacity="0.27"/><rect x="4" y="43" width="1" height="1" fill="#000" fill-opacity="0.10"/><rect x="5" y="42" width="1" height="1" fill="#000" fill-opacity="0.45"/><rect x="5" y="43" width="1" height="1" fill="#000" fill-opacity="0.17"/><rect x="6" y="42" width="1" height="1" fill="#000" fill-opacity="0.45"/><rect x="6" y="43" width="1" height="1" fill="#000" fill-opacity="0.17"/><rect x="7" y="42" width="1" height="1" fill="#000" fill-opacity="0.45"/><rect x="7" y="43" width="1" height="1" fill="#000" fill-opacity="0.17"/><rect x="8" y="42" width="1" height="1" fill="#000" fill-opacity="0.45"/><rect x="8" y="43" width="1" height="1" fill="#000" fill-opacity="0.17"/><rect x="9" y="42" width="1" height="1" fill="#000" fill-opacity="0.45"/><rect x="9" y="43" width="1" height="1" fill="#000" fill-opacity="0.17"/><rect x="10" y="42" width="1" height="1" fill="#000" fill-opacity="0.45"/><rect x="10" y="43" width="1" height="1" fill="#000" fill-opacity="0.17"/><rect x="11" y="42" width="1" height="1" fill="#000" fill-opacity="0.45"/><rect x="11" y="43" width="1" height="1" fill="#000" fill-opacity="0.17"/><rect x="12" y="42" width="1" height="1" fill="#000" fill-opacity="0.45"/><rect x="12" y="43" width="1" height="1" fill="#000" fill-opacity="0.17"/><rect x="13" y="42" width="1" height="1" fill="#000" fill-opacity="0.45"/><rect x="13" y="43" width="1" height="1" fill="#000" fill-opacity="0.17"/><rect x="14" y="42" width="1" height="1" fill="#000" fill-opacity="0.27"/><rect x="14" y="43" width="1" height="1" fill="#000" fill-opacity="0.10"/><rect x="16" y="42" width="1" height="1" fill="#5a0af5" fill-opacity="0.70"/><rect x="16" y="43" width="1" height="1" fill="#5a0af5" fill-opacity="0.27"/><rect x="17" y="42" width="1" height="1" fill="#5a0af5" fill-opacity="0.70"/><rect x="17" y="43" width="1" height="1" fill="#5a0af5" fill-opacity="0.27"/><rect x="18" y="42" width="1" height="1" fill="#5a0af5" fill-opacity="0.70"/><rect x="18" y="43" width="1" height="1" fill="#5a0af5" fill-opacity="0.27"/><rect x="19" y="42" width="1" height="1" fill="#5a0af5" fill-opacity="0.70"/><rect x="19" y="43" width="1" height="1" fill="#5a0af5" fill-opacity="0.27"/><rect x="20" y="42" width="1" height="1" fill="#5a0af5" fill-opacity="0.70"/><rect x="20" y="43" width="1" height="1" fill="#5a0af5" fill-opacity="0.27"/><rect x="21" y="42" width="1" height="1" fill="#5a0af5" fill-opacity="0.70"/><rect x="21" y="43" width="1" height="1" fill="#5a0af5" fill-opacity="0.27"/><rect x="22" y="42" width="1" height="1" fill="#5a0af5" fill-opacity="0.70"/><rect x="22" y="43" width="1" height="1" fill="#5a0af5" fill-opacity="0.27"/><rect x="23" y="42" width="1" height="1" fill="#5a0af5" fill-opacity="0.70"/><rect x="23" y="43" width="1" height="1" fill="#5a0af5" fill-opacity="0.27"/><rect x="24" y="42" width="1" height="1" fill="#5a0af5" fill-opacity="0.70"/><rect x="24" y="43" width="1" height="1" fill="#5a0af5" fill-opacity="0.27"/><rect x="25" y="42" width="1" height="1" fill="#000" fill-opacity="0.20"/><rect x="25" y="43" width="1" height="1" fill="#000" fill-opacity="0.08"/><rect x="4" y="44" width="1" height="1" fill="#000" fill-opacity="0.27"/><rect x="4" y="45" width="1" height="1" fill="#000" fill-opacity="0.10"/><rect x="5" y="44" width="1" height="1" fill="#000" fill-opacity="0.45"/><rect x="5" y="45" width="1" height="1" fill="#000" fill-opacity="0.17"/><rect x="6" y="44" width="1" height="1" fill="#000" fill-opacity="0.45"/><rect x="6" y="45" width="1" height="1" fill="#000" fill-opacity="0.17"/><rect x="7" y="44" width="1" height="1" fill="#000" fill-opacity="0.45"/><rect x="7" y="45" width="1" height="1" fill="#000" fill-opacity="0.17"/><rect x="8" y="44" width="1" height="1" fill="#000" fill-opacity="0.45"/><rect x="8" y="45" width="1" height="1" fill="#000" fill-opacity="0.17"/><rect x="9" y="44" width="1" height="1" fill="#000" fill-opacity="0.27"/><rect x="9" y="45" width="1" height="1" fill="#000" fill-opacity="0.10"/><rect x="11" y="44" width="1" height="1" fill="#5a0af5" fill-opacity="0.70"/><rect x="11" y="45" width="1" height="1" fill="#5a0af5" fill-opacity="0.27"/><rect x="12" y="44" width="1" height="1" fill="#5a0af5" fill-opacity="0.70"/><rect x="12" y="45" width="1" height="1" fill="#5a0af5" fill-opacity="0.27"/><rect x="13" y="44" width="1" height="1" fill="#5a0af5" fill-opacity="0.70"/><rect x="13" y="45" width="1" height="1" fill="#5a0af5" fill-opacity="0.27"/><rect x="14" y="44" width="1" height="1" fill="#5a0af5" fill-opacity="0.70"/><rect x="14" y="45" width="1" height="1" fill="#5a0af5" fill-opacity="0.27"/><rect x="15" y="44" width="1" height="1" fill="#5a0af5" fill-opacity="0.70"/><rect x="15" y="45" width="1" height="1" fill="#5a0af5" fill-opacity="0.27"/><rect x="16" y="44" width="1" height="1" fill="#000" fill-opacity="0.20"/><rect x="16" y="45" width="1" height="1" fill="#000" fill-opacity="0.08"/><rect x="4" y="46" width="1" height="1" fill="#000" fill-opacity="0.27"/><rect x="4" y="47" width="1" height="1" fill="#000" fill-opacity="0.10"/><rect x="5" y="46" width="1" height="1" fill="#000" fill-opacity="0.45"/><rect x="5" y="47" width="1" height="1" fill="#000" fill-opacity="0.17"/><rect x="6" y="46" width="1" height="1" fill="#000" fill-opacity="0.45"/><rect x="6" y="47" width="1" height="1" fill="#000" fill-opacity="0.17"/><rect x="7" y="46" width="1" height="1" fill="#000" fill-opacity="0.45"/><rect x="7" y="47" width="1" height="1" fill="#000" fill-opacity="0.17"/><rect x="8" y="46" width="1" height="1" fill="#000" fill-opacity="0.45"/><rect x="8" y="47" width="1" height="1" fill="#000" fill-opacity="0.17"/><rect x="9" y="46" width="1" height="1" fill="#000" fill-opacity="0.45"/><rect x="9" y="47" width="1" height="1" fill="#000" fill-opacity="0.17"/><rect x="10" y="46" width="1" height="1" fill="#000" fill-opacity="0.45"/><rect x="10" y="47" width="1" height="1" fill="#000" fill-opacity="0.17"/><rect x="11" y="46" width="1" height="1" fill="#000" fill-opacity="0.45"/><rect x="11" y="47" width="1" height="1" fill="#000" fill-opacity="0.17"/><rect x="12" y="46" width="1" height="1" fill="#000" fill-opacity="0.45"/><rect x="12" y="47" width="1" height="1" fill="#000" fill-opacity="0.17"/><rect x="13" y="46" width="1" height="1" fill="#000" fill-opacity="0.27"/><rect x="13" y="47" width="1" height="1" fill="#000" fill-opacity="0.10"/><rect x="15" y="46" width="1" height="1" fill="#5a0af5" fill-opacity="0.70"/><rect x="15" y="47" width="1" height="1" fill="#5a0af5" fill-opacity="0.27"/><rect x="16" y="46" width="1" height="1" fill="#5a0af5" fill-opacity="0.70"/><rect x="16" y="47" width="1" height="1" fill="#5a0af5" fill-opacity="0.27"/><rect x="17" y="46" width="1" height="1" fill="#5a0af5" fill-opacity="0.70"/><rect x="17" y="47" width="1" height="1" fill="#5a0af5" fill-opacity="0.27"/><rect x="18" y="46" width="1" height="1" fill="#5a0af5" fill-opacity="0.70"/><rect x="18" y="47" width="1" height="1" fill="#5a0af5" fill-opacity="0.27"/><rect x="19" y="46" width="1" height="1" fill="#5a0af5" fill-opacity="0.70"/><rect x="19" y="47" width="1" height="1" fill="#5a0af5" fill-opacity="0.27"/><rect x="20" y="46" width="1" height="1" fill="#000" fill-opacity="0.20"/><rect x="20" y="47" width="1" height="1" fill="#000" fill-opacity="0.08"/><rect x="4" y="48" width="1" height="1" fill="#000" fill-opacity="0.27"/><rect x="4" y="49" width="1" height="1" fill="#000" fill-opacity="0.10"/><rect x="5" y="48" width="1" height="1" fill="#000" fill-opacity="0.45"/><rect x="5" y="49" width="1" height="1" fill="#000" fill-opacity="0.17"/><rect x="6" y="48" width="1" height="1" fill="#000" fill-opacity="0.45"/><rect x="6" y="49" width="1" height="1" fill="#000" fill-opacity="0.17"/><rect x="7" y="48" width="1" height="1" fill="#000" fill-opacity="0.45"/><rect x="7" y="49" width="1" height="1" fill="#000" fill-opacity="0.17"/><rect x="8" y="48" width="1" height="1" fill="#000" fill-opacity="0.45"/><rect x="8" y="49" width="1" height="1" fill="#000" fill-opacity="0.17"/><rect x="9" y="48" width="1" height="1" fill="#000" fill-opacity="0.45"/><rect x="9" y="49" width="1" height="1" fill="#000" fill-opacity="0.17"/><rect x="10" y="48" width="1" height="1" fill="#000" fill-opacity="0.27"/><rect x="10" y="49" width="1" height="1" fill="#000" fill-opacity="0.10"/><rect x="12" y="48" width="1" height="1" fill="#5a0af5" fill-opacity="0.70"/><rect x="12" y="49" width="1" height="1" fill="#5a0af5" fill-opacity="0.27"/><rect x="13" y="48" width="1" height="1" fill="#5a0af5" fill-opacity="0.70"/><rect x="13" y="49" width="1" height="1" fill="#5a0af5" fill-opacity="0.27"/><rect x="14" y="48" width="1" height="1" fill="#5a0af5" fill-opacity="0.70"/><rect x="14" y="49" width="1" height="1" fill="#5a0af5" fill-opacity="0.27"/><rect x="15" y="48" width="1" height="1" fill="#5a0af5" fill-opacity="0.70"/><rect x="15" y="49" width="1" height="1" fill="#5a0af5" fill-opacity="0.27"/><rect x="16" y="48" width="1" height="1" fill="#5a0af5" fill-opacity="0.70"/><rect x="16" y="49" width="1" height="1" fill="#5a0af5" fill-opacity="0.27"/><rect x="17" y="48" width="1" height="1" fill="#000" fill-opacity="0.20"/><rect x="17" y="49" width="1" height="1" fill="#000" fill-opacity="0.08"/><rect x="4" y="50" width="1" height="1" fill="#000" fill-opacity="0.27"/><rect x="4" y="51" width="1" height="1" fill="#000" fill-opacity="0.10"/><rect x="5" y="50" width="1" height="1" fill="#000" fill-opacity="0.45"/><rect x="5" y="51" width="1" height="1" fill="#000" fill-opacity="0.17"/><rect x="6" y="50" width="1" height="1" fill="#000" fill-opacity="0.45"/><rect x="6" y="51" width="1" height="1" fill="#000" fill-opacity="0.17"/><rect x="7" y="50" width="1" height="1" fill="#000" fill-opacity="0.45"/><rect x="7" y="51" width="1" height="1" fill="#000" fill-opacity="0.17"/><rect x="8" y="50" width="1" height="1" fill="#000" fill-opacity="0.45"/><rect x="8" y="51" width="1" height="1" fill="#000" fill-opacity="0.17"/><rect x="9" y="50" width="1" height="1" fill="#000" fill-opacity="0.45"/><rect x="9" y="51" width="1" height="1" fill="#000" fill-opacity="0.17"/><rect x="10" y="50" width="1" height="1" fill="#000" fill-opacity="0.27"/><rect x="10" y="51" width="1" height="1" fill="#000" fill-opacity="0.10"/><rect x="12" y="50" width="1" height="1" fill="#5a0af5" fill-opacity="0.70"/><rect x="12" y="51" width="1" height="1" fill="#5a0af5" fill-opacity="0.27"/><rect x="13" y="50" width="1" height="1" fill="#5a0af5" fill-opacity="0.70"/><rect x="13" y="51" width="1" height="1" fill="#5a0af5" fill-opacity="0.27"/><rect x="14" y="50" width="1" height="1" fill="#5a0af5" fill-opacity="0.70"/><rect x="14" y="51" width="1" height="1" fill="#5a0af5" fill-opacity="0.27"/><rect x="15" y="50" width="1" height="1" fill="#5a0af5" fill-opacity="0.70"/><rect x="15" y="51" width="1" height="1" fill="#5a0af5" fill-opacity="0.27"/><rect x="16" y="50" width="1" height="1" fill="#5a0af5" fill-opacity="0.70"/><rect x="16" y="51" width="1" height="1" fill="#5a0af5" fill-opacity="0.27"/><rect x="17" y="50" width="1" height="1" fill="#000" fill-opacity="0.20"/><rect x="17" y="51" width="1" height="1" fill="#000" fill-opacity="0.08"/><rect x="4" y="52" width="1" height="1" fill="#000" fill-opacity="0.27"/><rect x="4" y="53" width="1" height="1" fill="#000" fill-opacity="0.10"/><rect x="5" y="52" width="1" height="1" fill="#000" fill-opacity="0.45"/><rect x="5" y="53" width="1" height="1" fill="#000" fill-opacity="0.17"/><rect x="6" y="52" width="1" height="1" fill="#000" fill-opacity="0.45"/><rect x="6" y="53" width="1" height="1" fill="#000" fill-opacity="0.17"/><rect x="7" y="52" width="1" height="1" fill="#000" fill-opacity="0.45"/><rect x="7" y="53" width="1" height="1" fill="#000" fill-opacity="0.17"/><rect x="8" y="52" width="1" height="1" fill="#000" fill-opacity="0.45"/><rect x="8" y="53" width="1" height="1" fill="#000" fill-opacity="0.17"/><rect x="9" y="52" width="1" height="1" fill="#000" fill-opacity="0.20"/><rect x="9" y="53" width="1" height="1" fill="#000" fill-opacity="0.08"/><rect x="10" y="52" width="1" height="1" fill="#000" fill-opacity="0.45"/><rect x="10" y="53" width="1" height="1" fill="#000" fill-opacity="0.17"/><rect x="11" y="52" width="1" height="1" fill="#000" fill-opacity="0.45"/><rect x="11" y="53" width="1" height="1" fill="#000" fill-opacity="0.17"/><rect x="12" y="52" width="1" height="1" fill="#000" fill-opacity="0.45"/><rect x="12" y="53" width="1" height="1" fill="#000" fill-opacity="0.17"/><rect x="13" y="52" width="1" height="1" fill="#000" fill-opacity="0.45"/><rect x="13" y="53" width="1" height="1" fill="#000" fill-opacity="0.17"/><rect x="14" y="52" width="1" height="1" fill="#000" fill-opacity="0.45"/><rect x="14" y="53" width="1" height="1" fill="#000" fill-opacity="0.17"/><rect x="15" y="52" width="1" height="1" fill="#000" fill-opacity="0.27"/><rect x="15" y="53" width="1" height="1" fill="#000" fill-opacity="0.10"/><rect x="17" y="52" width="1" height="1" fill="#000" fill-opacity="0.56"/><rect x="17" y="53" width="1" height="1" fill="#000" fill-opacity="0.22"/><rect x="18" y="52" width="1" height="1" fill="#000" fill-opacity="0.56"/><rect x="18" y="53" width="1" height="1" fill="#000" fill-opacity="0.22"/><rect x="19" y="52" width="1" height="1" fill="#000" fill-opacity="0.56"/><rect x="19" y="53" width="1" height="1" fill="#000" fill-opacity="0.22"/><rect x="20" y="52" width="1" height="1" fill="#000" fill-opacity="0.56"/><rect x="20" y="53" width="1" height="1" fill="#000" fill-opacity="0.22"/><rect x="21" y="52" width="1" height="1" fill="#000" fill-opacity="0.56"/><rect x="21" y="53" width="1" height="1" fill="#000" fill-opacity="0.22"/><rect x="22" y="52" width="1" height="1" fill="#000" fill-opacity="0.56"/><rect x="22" y="53" width="1" height="1" fill="#000" fill-opacity="0.22"/><rect x="23" y="52" width="1" height="1" fill="#000" fill-opacity="0.20"/><rect x="23" y="53" width="1" height="1" fill="#000" fill-opacity="0.08"/><rect x="4" y="54" width="1" height="1" fill="#000" fill-opacity="0.27"/><rect x="4" y="55" width="1" height="1" fill="#000" fill-opacity="0.10"/><rect x="5" y="54" width="1" height="1" fill="#000" fill-opacity="0.45"/><rect x="5" y="55" width="1" height="1" fill="#000" fill-opacity="0.17"/><rect x="6" y="54" width="1" height="1" fill="#000" fill-opacity="0.45"/><rect x="6" y="55" width="1" height="1" fill="#000" fill-opacity="0.17"/><rect x="7" y="54" width="1" height="1" fill="#000" fill-opacity="0.45"/><rect x="7" y="55" width="1" height="1" fill="#000" fill-opacity="0.17"/><rect x="8" y="54" width="1" height="1" fill="#000" fill-opacity="0.45"/><rect x="8" y="55" width="1" height="1" fill="#000" fill-opacity="0.17"/><rect x="9" y="54" width="1" height="1" fill="#000" fill-opacity="0.45"/><rect x="9" y="55" width="1" height="1" fill="#000" fill-opacity="0.17"/><rect x="10" y="54" width="1" height="1" fill="#000" fill-opacity="0.45"/><rect x="10" y="55" width="1" height="1" fill="#000" fill-opacity="0.17"/><rect x="11" y="54" width="1" height="1" fill="#000" fill-opacity="0.45"/><rect x="11" y="55" width="1" height="1" fill="#000" fill-opacity="0.17"/><rect x="12" y="54" width="1" height="1" fill="#000" fill-opacity="0.27"/><rect x="12" y="55" width="1" height="1" fill="#000" fill-opacity="0.10"/><rect x="14" y="54" width="1" height="1" fill="#000" fill-opacity="0.56"/><rect x="14" y="55" width="1" height="1" fill="#000" fill-opacity="0.22"/><rect x="15" y="54" width="1" height="1" fill="#000" fill-opacity="0.56"/><rect x="15" y="55" width="1" height="1" fill="#000" fill-opacity="0.22"/><rect x="16" y="54" width="1" height="1" fill="#000" fill-opacity="0.56"/><rect x="16" y="55" width="1" height="1" fill="#000" fill-opacity="0.22"/><rect x="17" y="54" width="1" height="1" fill="#000" fill-opacity="0.56"/><rect x="17" y="55" width="1" height="1" fill="#000" fill-opacity="0.22"/><rect x="18" y="54" width="1" height="1" fill="#000" fill-opacity="0.56"/><rect x="18" y="55" width="1" height="1" fill="#000" fill-opacity="0.22"/><rect x="19" y="54" width="1" height="1" fill="#000" fill-opacity="0.56"/><rect x="19" y="55" width="1" height="1" fill="#000" fill-opacity="0.22"/><rect x="20" y="54" width="1" height="1" fill="#000" fill-opacity="0.20"/><rect x="20" y="55" width="1" height="1" fill="#000" fill-opacity="0.08"/><rect x="4" y="56" width="1" height="1" fill="#000" fill-opacity="0.27"/><rect x="4" y="57" width="1" height="1" fill="#000" fill-opacity="0.10"/><rect x="5" y="56" width="1" height="1" fill="#000" fill-opacity="0.45"/><rect x="5" y="57" width="1" height="1" fill="#000" fill-opacity="0.17"/><rect x="6" y="56" width="1" height="1" fill="#000" fill-opacity="0.45"/><rect x="6" y="57" width="1" height="1" fill="#000" fill-opacity="0.17"/><rect x="7" y="56" width="1" height="1" fill="#000" fill-opacity="0.20"/><rect x="7" y="57" width="1" height="1" fill="#000" fill-opacity="0.08"/><rect x="8" y="56" width="1" height="1" fill="#000" fill-opacity="0.50"/><rect x="8" y="57" width="1" height="1" fill="#000" fill-opacity="0.19"/><rect x="9" y="56" width="1" height="1" fill="#000" fill-opacity="0.50"/><rect x="9" y="57" width="1" height="1" fill="#000" fill-opacity="0.19"/><rect x="10" y="56" width="1" height="1" fill="#000" fill-opacity="0.45"/><rect x="10" y="57" width="1" height="1" fill="#000" fill-opacity="0.17"/><rect x="11" y="56" width="1" height="1" fill="#000" fill-opacity="0.27"/><rect x="11" y="57" width="1" height="1" fill="#000" fill-opacity="0.10"/><rect x="13" y="56" width="1" height="1" fill="#000" fill-opacity="0.56"/><rect x="13" y="57" width="1" height="1" fill="#000" fill-opacity="0.22"/><rect x="14" y="56" width="1" height="1" fill="#000" fill-opacity="0.56"/><rect x="14" y="57" width="1" height="1" fill="#000" fill-opacity="0.22"/><rect x="15" y="56" width="1" height="1" fill="#000" fill-opacity="0.56"/><rect x="15" y="57" width="1" height="1" fill="#000" fill-opacity="0.22"/><rect x="16" y="56" width="1" height="1" fill="#000" fill-opacity="0.56"/><rect x="16" y="57" width="1" height="1" fill="#000" fill-opacity="0.22"/><rect x="17" y="56" width="1" height="1" fill="#000" fill-opacity="0.56"/><rect x="17" y="57" width="1" height="1" fill="#000" fill-opacity="0.22"/><rect x="18" y="56" width="1" height="1" fill="#000" fill-opacity="0.56"/><rect x="18" y="57" width="1" height="1" fill="#000" fill-opacity="0.22"/><rect x="19" y="56" width="1" height="1" fill="#000" fill-opacity="0.20"/><rect x="19" y="57" width="1" height="1" fill="#000" fill-opacity="0.08"/><rect x="4" y="58" width="1" height="1" fill="#000" fill-opacity="0.27"/><rect x="4" y="59" width="1" height="1" fill="#000" fill-opacity="0.10"/><rect x="5" y="58" width="1" height="1" fill="#000" fill-opacity="0.45"/><rect x="5" y="59" width="1" height="1" fill="#000" fill-opacity="0.17"/><rect x="6" y="58" width="1" height="1" fill="#000" fill-opacity="0.45"/><rect x="6" y="59" width="1" height="1" fill="#000" fill-opacity="0.17"/><rect x="7" y="58" width="1" height="1" fill="#000" fill-opacity="0.20"/><rect x="7" y="59" width="1" height="1" fill="#000" fill-opacity="0.08"/><rect x="8" y="58" width="1" height="1" fill="#000" fill-opacity="0.50"/><rect x="8" y="59" width="1" height="1" fill="#000" fill-opacity="0.19"/><rect x="9" y="58" width="1" height="1" fill="#000" fill-opacity="0.50"/><rect x="9" y="59" width="1" height="1" fill="#000" fill-opacity="0.19"/><rect x="10" y="58" width="1" height="1" fill="#000" fill-opacity="0.50"/><rect x="10" y="59" width="1" height="1" fill="#000" fill-opacity="0.19"/><rect x="11" y="58" width="1" height="1" fill="#000" fill-opacity="0.45"/><rect x="11" y="59" width="1" height="1" fill="#000" fill-opacity="0.17"/><rect x="12" y="58" width="1" height="1" fill="#000" fill-opacity="0.27"/><rect x="12" y="59" width="1" height="1" fill="#000" fill-opacity="0.10"/><rect x="14" y="58" width="1" height="1" fill="#000" fill-opacity="0.56"/><rect x="14" y="59" width="1" height="1" fill="#000" fill-opacity="0.22"/><rect x="15" y="58" width="1" height="1" fill="#000" fill-opacity="0.56"/><rect x="15" y="59" width="1" height="1" fill="#000" fill-opacity="0.22"/><rect x="16" y="58" width="1" height="1" fill="#000" fill-opacity="0.56"/><rect x="16" y="59" width="1" height="1" fill="#000" fill-opacity="0.22"/><rect x="17" y="58" width="1" height="1" fill="#000" fill-opacity="0.56"/><rect x="17" y="59" width="1" height="1" fill="#000" fill-opacity="0.22"/><rect x="18" y="58" width="1" height="1" fill="#000" fill-opacity="0.56"/><rect x="18" y="59" width="1" height="1" fill="#000" fill-opacity="0.22"/><rect x="19" y="58" width="1" height="1" fill="#000" fill-opacity="0.56"/><rect x="19" y="59" width="1" height="1" fill="#000" fill-opacity="0.22"/><rect x="20" y="58" width="1" height="1" fill="#000" fill-opacity="0.20"/><rect x="20" y="59" width="1" height="1" fill="#000" fill-opacity="0.08"/><rect x="4" y="60" width="1" height="1" fill="#000" fill-opacity="0.27"/><rect x="4" y="61" width="1" height="1" fill="#000" fill-opacity="0.10"/><rect x="5" y="60" width="1" height="1" fill="#000" fill-opacity="0.45"/><rect x="5" y="61" width="1" height="1" fill="#000" fill-opacity="0.17"/><rect x="6" y="60" width="1" height="1" fill="#000" fill-opacity="0.45"/><rect x="6" y="61" width="1" height="1" fill="#000" fill-opacity="0.17"/><rect x="7" y="60" width="1" height="1" fill="#000" fill-opacity="0.20"/><rect x="7" y="61" width="1" height="1" fill="#000" fill-opacity="0.08"/><rect x="8" y="60" width="1" height="1" fill="#000" fill-opacity="0.50"/><rect x="8" y="61" width="1" height="1" fill="#000" fill-opacity="0.19"/><rect x="9" y="60" width="1" height="1" fill="#000" fill-opacity="0.45"/><rect x="9" y="61" width="1" height="1" fill="#000" fill-opacity="0.17"/><rect x="10" y="60" width="1" height="1" fill="#000" fill-opacity="0.27"/><rect x="10" y="61" width="1" height="1" fill="#000" fill-opacity="0.10"/><rect x="12" y="60" width="1" height="1" fill="#000" fill-opacity="0.56"/><rect x="12" y="61" width="1" height="1" fill="#000" fill-opacity="0.22"/><rect x="13" y="60" width="1" height="1" fill="#000" fill-opacity="0.56"/><rect x="13" y="61" width="1" height="1" fill="#000" fill-opacity="0.22"/><rect x="14" y="60" width="1" height="1" fill="#000" fill-opacity="0.56"/><rect x="14" y="61" width="1" height="1" fill="#000" fill-opacity="0.22"/><rect x="15" y="60" width="1" height="1" fill="#000" fill-opacity="0.56"/><rect x="15" y="61" width="1" height="1" fill="#000" fill-opacity="0.22"/><rect x="16" y="60" width="1" height="1" fill="#000" fill-opacity="0.56"/><rect x="16" y="61" width="1" height="1" fill="#000" fill-opacity="0.22"/><rect x="17" y="60" width="1" height="1" fill="#000" fill-opacity="0.56"/><rect x="17" y="61" width="1" height="1" fill="#000" fill-opacity="0.22"/><rect x="18" y="60" width="1" height="1" fill="#000" fill-opacity="0.20"/><rect x="18" y="61" width="1" height="1" fill="#000" fill-opacity="0.08"/><rect x="4" y="62" width="1" height="1" fill="#000" fill-opacity="0.27"/><rect x="4" y="63" width="1" height="1" fill="#000" fill-opacity="0.10"/><rect x="5" y="62" width="1" height="1" fill="#000" fill-opacity="0.45"/><rect x="5" y="63" width="1" height="1" fill="#000" fill-opacity="0.17"/><rect x="6" y="62" width="1" height="1" fill="#000" fill-opacity="0.45"/><rect x="6" y="63" width="1" height="1" fill="#000" fill-opacity="0.17"/><rect x="7" y="62" width="1" height="1" fill="#000" fill-opacity="0.20"/><rect x="7" y="63" width="1" height="1" fill="#000" fill-opacity="0.08"/><rect x="8" y="62" width="1" height="1" fill="#000" fill-opacity="0.50"/><rect x="8" y="63" width="1" height="1" fill="#000" fill-opacity="0.19"/><rect x="9" y="62" width="1" height="1" fill="#000" fill-opacity="0.50"/><rect x="9" y="63" width="1" height="1" fill="#000" fill-opacity="0.19"/><rect x="10" y="62" width="1" height="1" fill="#000" fill-opacity="0.45"/><rect x="10" y="63" width="1" height="1" fill="#000" fill-opacity="0.17"/><rect x="11" y="62" width="1" height="1" fill="#000" fill-opacity="0.27"/><rect x="11" y="63" width="1" height="1" fill="#000" fill-opacity="0.10"/><rect x="13" y="62" width="1" height="1" fill="#000" fill-opacity="0.56"/><rect x="13" y="63" width="1" height="1" fill="#000" fill-opacity="0.22"/><rect x="14" y="62" width="1" height="1" fill="#000" fill-opacity="0.56"/><rect x="14" y="63" width="1" height="1" fill="#000" fill-opacity="0.22"/><rect x="15" y="62" width="1" height="1" fill="#000" fill-opacity="0.56"/><rect x="15" y="63" width="1" height="1" fill="#000" fill-opacity="0.22"/><rect x="16" y="62" width="1" height="1" fill="#000" fill-opacity="0.56"/><rect x="16" y="63" width="1" height="1" fill="#000" fill-opacity="0.22"/><rect x="17" y="62" width="1" height="1" fill="#000" fill-opacity="0.56"/><rect x="17" y="63" width="1" height="1" fill="#000" fill-opacity="0.22"/><rect x="18" y="62" width="1" height="1" fill="#000" fill-opacity="0.56"/><rect x="18" y="63" width="1" height="1" fill="#000" fill-opacity="0.22"/><rect x="19" y="62" width="1" height="1" fill="#000" fill-opacity="0.20"/><rect x="19" y="63" width="1" height="1" fill="#000" fill-opacity="0.08"/><rect x="4" y="64" width="1" height="1" fill="#000" fill-opacity="0.27"/><rect x="4" y="65" width="1" height="1" fill="#000" fill-opacity="0.10"/><rect x="5" y="64" width="1" height="1" fill="#000" fill-opacity="0.45"/><rect x="5" y="65" width="1" height="1" fill="#000" fill-opacity="0.17"/><rect x="6" y="64" width="1" height="1" fill="#000" fill-opacity="0.45"/><rect x="6" y="65" width="1" height="1" fill="#000" fill-opacity="0.17"/><rect x="7" y="64" width="1" height="1" fill="#000" fill-opacity="0.20"/><rect x="7" y="65" width="1" height="1" fill="#000" fill-opacity="0.08"/><rect x="8" y="64" width="1" height="1" fill="#000" fill-opacity="0.50"/><rect x="8" y="65" width="1" height="1" fill="#000" fill-opacity="0.19"/><rect x="9" y="64" width="1" height="1" fill="#000" fill-opacity="0.50"/><rect x="9" y="65" width="1" height="1" fill="#000" fill-opacity="0.19"/><rect x="10" y="64" width="1" height="1" fill="#000" fill-opacity="0.50"/><rect x="10" y="65" width="1" height="1" fill="#000" fill-opacity="0.19"/><rect x="11" y="64" width="1" height="1" fill="#000" fill-opacity="0.45"/><rect x="11" y="65" width="1" height="1" fill="#000" fill-opacity="0.17"/><rect x="12" y="64" width="1" height="1" fill="#000" fill-opacity="0.27"/><rect x="12" y="65" width="1" height="1" fill="#000" fill-opacity="0.10"/><rect x="14" y="64" width="1" height="1" fill="#000" fill-opacity="0.56"/><rect x="14" y="65" width="1" height="1" fill="#000" fill-opacity="0.22"/><rect x="15" y="64" width="1" height="1" fill="#000" fill-opacity="0.56"/><rect x="15" y="65" width="1" height="1" fill="#000" fill-opacity="0.22"/><rect x="16" y="64" width="1" height="1" fill="#000" fill-opacity="0.56"/><rect x="16" y="65" width="1" height="1" fill="#000" fill-opacity="0.22"/><rect x="17" y="64" width="1" height="1" fill="#000" fill-opacity="0.56"/><rect x="17" y="65" width="1" height="1" fill="#000" fill-opacity="0.22"/><rect x="18" y="64" width="1" height="1" fill="#000" fill-opacity="0.56"/><rect x="18" y="65" width="1" height="1" fill="#000" fill-opacity="0.22"/><rect x="19" y="64" width="1" height="1" fill="#000" fill-opacity="0.56"/><rect x="19" y="65" width="1" height="1" fill="#000" fill-opacity="0.22"/><rect x="20" y="64" width="1" height="1" fill="#000" fill-opacity="0.20"/><rect x="20" y="65" width="1" height="1" fill="#000" fill-opacity="0.08"/><rect x="4" y="66" width="1" height="1" fill="#000" fill-opacity="0.27"/><rect x="4" y="67" width="1" height="1" fill="#000" fill-opacity="0.10"/><rect x="5" y="66" width="1" height="1" fill="#000" fill-opacity="0.45"/><rect x="5" y="67" width="1" height="1" fill="#000" fill-opacity="0.17"/><rect x="6" y="66" width="1" height="1" fill="#000" fill-opacity="0.45"/><rect x="6" y="67" width="1" height="1" fill="#000" fill-opacity="0.17"/><rect x="7" y="66" width="1" height="1" fill="#000" fill-opacity="0.20"/><rect x="7" y="67" width="1" height="1" fill="#000" fill-opacity="0.08"/><rect x="8" y="66" width="1" height="1" fill="#000" fill-opacity="0.50"/><rect x="8" y="67" width="1" height="1" fill="#000" fill-opacity="0.19"/><rect x="9" y="66" width="1" height="1" fill="#000" fill-opacity="0.45"/><rect x="9" y="67" width="1" height="1" fill="#000" fill-opacity="0.17"/><rect x="10" y="66" width="1" height="1" fill="#000" fill-opacity="0.27"/><rect x="10" y="67" width="1" height="1" fill="#000" fill-opacity="0.10"/><rect x="12" y="66" width="1" height="1" fill="#000" fill-opacity="0.56"/><rect x="12" y="67" width="1" height="1" fill="#000" fill-opacity="0.22"/><rect x="13" y="66" width="1" height="1" fill="#000" fill-opacity="0.56"/><rect x="13" y="67" width="1" height="1" fill="#000" fill-opacity="0.22"/><rect x="14" y="66" width="1" height="1" fill="#000" fill-opacity="0.56"/><rect x="14" y="67" width="1" height="1" fill="#000" fill-opacity="0.22"/><rect x="15" y="66" width="1" height="1" fill="#000" fill-opacity="0.56"/><rect x="15" y="67" width="1" height="1" fill="#000" fill-opacity="0.22"/><rect x="16" y="66" width="1" height="1" fill="#000" fill-opacity="0.56"/><rect x="16" y="67" width="1" height="1" fill="#000" fill-opacity="0.22"/><rect x="17" y="66" width="1" height="1" fill="#000" fill-opacity="0.56"/><rect x="17" y="67" width="1" height="1" fill="#000" fill-opacity="0.22"/><rect x="19" y="66" width="1" height="1" fill="#000" fill-opacity="0.56"/><rect x="19" y="67" width="1" height="1" fill="#000" fill-opacity="0.22"/><rect x="20" y="66" width="1" height="1" fill="#000" fill-opacity="0.56"/><rect x="20" y="67" width="1" height="1" fill="#000" fill-opacity="0.22"/><rect x="21" y="66" width="1" height="1" fill="#000" fill-opacity="0.56"/><rect x="21" y="67" width="1" height="1" fill="#000" fill-opacity="0.22"/><rect x="22" y="66" width="1" height="1" fill="#000" fill-opacity="0.56"/><rect x="22" y="67" width="1" height="1" fill="#000" fill-opacity="0.22"/><rect x="23" y="66" width="1" height="1" fill="#000" fill-opacity="0.56"/><rect x="23" y="67" width="1" height="1" fill="#000" fill-opacity="0.22"/><rect x="24" y="66" width="1" height="1" fill="#000" fill-opacity="0.56"/><rect x="24" y="67" width="1" height="1" fill="#000" fill-opacity="0.22"/><rect x="25" y="66" width="1" height="1" fill="#000" fill-opacity="0.56"/><rect x="25" y="67" width="1" height="1" fill="#000" fill-opacity="0.22"/><rect x="26" y="66" width="1" height="1" fill="#000" fill-opacity="0.56"/><rect x="26" y="67" width="1" height="1" fill="#000" fill-opacity="0.22"/><rect x="27" y="66" width="1" height="1" fill="#000" fill-opacity="0.56"/><rect x="27" y="67" width="1" height="1" fill="#000" fill-opacity="0.22"/><rect x="29" y="66" width="1" height="1" fill="#ee3b2a" fill-opacity="0.34"/><rect x="29" y="67" width="1" height="1" fill="#ee3b2a" fill-opacity="0.13"/><rect x="30" y="66" width="1" height="1" fill="#ee3b2a" fill-opacity="0.25"/><rect x="30" y="67" width="1" height="1" fill="#ee3b2a" fill-opacity="0.10"/><rect x="31" y="66" width="1" height="1" fill="#ee3b2a" fill-opacity="0.34"/><rect x="31" y="67" width="1" height="1" fill="#ee3b2a" fill-opacity="0.13"/><rect x="33" y="66" width="1" height="1" fill="#000" fill-opacity="0.56"/><rect x="33" y="67" width="1" height="1" fill="#000" fill-opacity="0.22"/><rect x="34" y="66" width="1" height="1" fill="#000" fill-opacity="0.56"/><rect x="34" y="67" width="1" height="1" fill="#000" fill-opacity="0.22"/><rect x="35" y="66" width="1" height="1" fill="#000" fill-opacity="0.56"/><rect x="35" y="67" width="1" height="1" fill="#000" fill-opacity="0.22"/><rect x="36" y="66" width="1" height="1" fill="#000" fill-opacity="0.56"/><rect x="36" y="67" width="1" height="1" fill="#000" fill-opacity="0.22"/><rect x="37" y="66" width="1" height="1" fill="#000" fill-opacity="0.56"/><rect x="37" y="67" width="1" height="1" fill="#000" fill-opacity="0.22"/><rect x="39" y="66" width="1" height="1" fill="#ee3b2a" fill-opacity="0.34"/><rect x="39" y="67" width="1" height="1" fill="#ee3b2a" fill-opacity="0.13"/><rect x="40" y="66" width="1" height="1" fill="#ee3b2a" fill-opacity="0.34"/><rect x="40" y="67" width="1" height="1" fill="#ee3b2a" fill-opacity="0.13"/><rect x="41" y="66" width="1" height="1" fill="#ee3b2a" fill-opacity="0.34"/><rect x="41" y="67" width="1" height="1" fill="#ee3b2a" fill-opacity="0.13"/><rect x="43" y="66" width="1" height="1" fill="#000" fill-opacity="0.56"/><rect x="43" y="67" width="1" height="1" fill="#000" fill-opacity="0.22"/><rect x="44" y="66" width="1" height="1" fill="#000" fill-opacity="0.56"/><rect x="44" y="67" width="1" height="1" fill="#000" fill-opacity="0.22"/><rect x="45" y="66" width="1" height="1" fill="#000" fill-opacity="0.56"/><rect x="45" y="67" width="1" height="1" fill="#000" fill-opacity="0.22"/><rect x="46" y="66" width="1" height="1" fill="#000" fill-opacity="0.56"/><rect x="46" y="67" width="1" height="1" fill="#000" fill-opacity="0.22"/><rect x="47" y="66" width="1" height="1" fill="#000" fill-opacity="0.56"/><rect x="47" y="67" width="1" height="1" fill="#000" fill-opacity="0.22"/><rect x="48" y="66" width="1" height="1" fill="#000" fill-opacity="0.56"/><rect x="48" y="67" width="1" height="1" fill="#000" fill-opacity="0.22"/><rect x="50" y="66" width="1" height="1" fill="#098658" fill-opacity="0.62"/><rect x="50" y="67" width="1" height="1" fill="#098658" fill-opacity="0.24"/><rect x="2" y="68" width="1" height="1" fill="#5a0af5" fill-opacity="0.39"/><rect x="2" y="69" width="1" height="1" fill="#5a0af5" fill-opacity="0.15"/><rect x="4" y="68" width="1" height="1" fill="#000" fill-opacity="0.27"/><rect x="4" y="69" width="1" height="1" fill="#000" fill-opacity="0.10"/><rect x="5" y="68" width="1" height="1" fill="#000" fill-opacity="0.45"/><rect x="5" y="69" width="1" height="1" fill="#000" fill-opacity="0.17"/><rect x="6" y="68" width="1" height="1" fill="#000" fill-opacity="0.45"/><rect x="6" y="69" width="1" height="1" fill="#000" fill-opacity="0.17"/><rect x="7" y="68" width="1" height="1" fill="#000" fill-opacity="0.45"/><rect x="7" y="69" width="1" height="1" fill="#000" fill-opacity="0.17"/><rect x="8" y="68" width="1" height="1" fill="#000" fill-opacity="0.20"/><rect x="8" y="69" width="1" height="1" fill="#000" fill-opacity="0.08"/><rect x="9" y="68" width="1" height="1" fill="#000" fill-opacity="0.45"/><rect x="9" y="69" width="1" height="1" fill="#000" fill-opacity="0.17"/><rect x="10" y="68" width="1" height="1" fill="#000" fill-opacity="0.45"/><rect x="10" y="69" width="1" height="1" fill="#000" fill-opacity="0.17"/><rect x="11" y="68" width="1" height="1" fill="#000" fill-opacity="0.45"/><rect x="11" y="69" width="1" height="1" fill="#000" fill-opacity="0.17"/><rect x="12" y="68" width="1" height="1" fill="#000" fill-opacity="0.45"/><rect x="12" y="69" width="1" height="1" fill="#000" fill-opacity="0.17"/><rect x="13" y="68" width="1" height="1" fill="#000" fill-opacity="0.45"/><rect x="13" y="69" width="1" height="1" fill="#000" fill-opacity="0.17"/><rect x="14" y="68" width="1" height="1" fill="#000" fill-opacity="0.27"/><rect x="14" y="69" width="1" height="1" fill="#000" fill-opacity="0.10"/><rect x="15" y="68" width="1" height="1" fill="#000" fill-opacity="0.20"/><rect x="15" y="69" width="1" height="1" fill="#000" fill-opacity="0.08"/><rect x="16" y="68" width="1" height="1" fill="#000" fill-opacity="0.20"/><rect x="16" y="69" width="1" height="1" fill="#000" fill-opacity="0.08"/></svg>
<div class="abs" style="left:1238px;top:0;width:1px;height:673px;background:#dadada"></div>
<div class="abs" style="left:1239px;top:653px;width:10px;height:2px;background:#3a3a3a"></div>
</div>
<div class="abs" style="left:1px;top:761px;width:1248px;height:11px;background:#ececec"></div>
<div class="abs" style="left:1px;top:772px;width:1248px;height:1px;background:#d9d9dc"></div>
<svg class="abs" style="left:0;top:0" width="700" height="780"><rect x="612" y="764" width="2" height="2" fill="#c8c8c8"/><rect x="612" y="767" width="2" height="2" fill="#c8c8c8"/><rect x="616" y="764" width="2" height="2" fill="#c8c8c8"/><rect x="616" y="767" width="2" height="2" fill="#c8c8c8"/><rect x="620" y="764" width="2" height="2" fill="#c8c8c8"/><rect x="620" y="767" width="2" height="2" fill="#c8c8c8"/><rect x="624" y="764" width="2" height="2" fill="#c8c8c8"/><rect x="624" y="767" width="2" height="2" fill="#c8c8c8"/><rect x="628" y="764" width="2" height="2" fill="#c8c8c8"/><rect x="628" y="767" width="2" height="2" fill="#c8c8c8"/><rect x="632" y="764" width="2" height="2" fill="#c8c8c8"/><rect x="632" y="767" width="2" height="2" fill="#c8c8c8"/><rect x="636" y="764" width="2" height="2" fill="#c8c8c8"/><rect x="636" y="767" width="2" height="2" fill="#c8c8c8"/><rect x="640" y="764" width="2" height="2" fill="#c8c8c8"/><rect x="640" y="767" width="2" height="2" fill="#c8c8c8"/></svg>
<div class="abs txt" style="left:58px;top:789px;font-size:14px;color:#666;line-height:17px;letter-spacing:-0.2px">Results</div>
<div class="abs txt" style="left:207px;top:789px;font-size:14px;color:#666;line-height:17px">Status Log</div>
<div class="abs txt" style="left:369px;top:789px;font-size:14px;color:#666;line-height:17px;letter-spacing:-0.25px">Query Log</div>
<svg class="abs" style="left:505px;top:780px" width="25" height="30" viewBox="505 780 25 30"><path d="M518.7 787.2L518 794H522.4L515.8 804.8L516.3 797.6H512.2z" fill="#7aaaf8"/></svg>
<div class="abs txt" style="left:532px;top:789px;font-size:14px;color:#6e6e6e;line-height:17px;letter-spacing:-0.35px">AI SQL Explain</div>
<div class="abs" style="left:638px;top:784px;width:40px;height:25px;border-radius:13px;background:linear-gradient(100deg,#c8dcfc,#9dc0f8)"></div>
<div class="abs txt" style="left:644px;top:790px;font-size:11px;color:#fff;line-height:13px;letter-spacing:-0.1px">BETA</div>
<div class="abs" style="left:1px;top:819px;width:160px;height:2px;background:#1e232b"></div>
<svg class="abs" style="left:805px;top:785px" width="30" height="25" viewBox="805 785 30 25"><path transform="translate(812,790.3) scale(0.555)" fill="#444" d="M15.5 14h-.79l-.28-.27C15.41 12.59 16 11.11 16 9.5 16 5.910 13.09 3 9.5 3S3 5.91 3 9.5 5.91 16 9.5 16c1.61 0 3.090-.59 4.23-1.57l.27.28v.79l5 4.99L20.49 19l-4.99-5zm-6 0C7.01 14 5 11.99 5 9.5S7.01 5 9.5 5 14 7.01 14 9.5 11.99 14 9.5 14z"/></svg>
<div class="abs" style="left:812px;top:811px;width:180px;height:1px;background:#8a8a8a"></div>
<svg class="abs" style="left:1025px;top:783px" width="30" height="30" viewBox="1025 783 30 30"><path transform="translate(1030,787)" fill="#111" d="M19 19H5V5h7V3H5c-1.110 0-2 .9-2 2v14c0 1.1.89 2 2 2h14c1.1 0 2-.9 2-2v-7h-2v7zM14 3v2h3.59l-9.83 9.83 1.41 1.41L19 6.41V10h2V3h-7z"/></svg>
<div class="abs txt" style="left:1061px;top:789px;font-size:14px;color:#1f1f1f;line-height:17px">Fetched a total of 200 records</div>
<div class="abs" style="left:1px;top:821px;width:1244px;height:303px;background:#fff;overflow:hidden">
<div class="abs" style="left:0;top:0;width:1244px;height:1px;background:#e2e2e2"></div>
<div class="abs txt hd" style="left:31px;top:3px">orderid</div>
<div class="abs txt hd" style="left:79px;top:3px">customerid</div>
<div class="abs txt hd" style="left:150px;top:3px">orderdate</div>
<div class="abs txt hd" style="left:299px;top:3px">cost</div>
<div class="abs txt hd" style="left:360px;top:3px">subtotal</div>
<div class="abs txt hd" style="left:507px;top:3px">taxes</div>
<div class="abs txt hd" style="left:655px;top:3px">total</div>
<div class="abs txt hd" style="left:802px;top:3px">uuid_group</div>
<div class="abs txt hd" style="left:1092px;top:3px">segment</div>
<div class="abs txt hd" style="left:1149px;top:3px">is_10k</div>
<div class="abs txt hd" style="left:1194px;top:3px">is_100k</div>
<div class="abs" style="left:0;top:22px;width:26px;height:300px;background:#e8f3fd"></div>
<div class="abs" style="left:0;top:21px;width:1244px;height:1px;background:#e4e4e4"></div>
<div class="abs" style="left:0;top:42px;width:1244px;height:1px;background:#e4e4e4"></div>
<div class="abs" style="left:0;top:63px;width:1244px;height:1px;background:#e4e4e4"></div>
<div class="abs" style="left:0;top:84px;width:1244px;height:1px;background:#e4e4e4"></div>
<div class="abs" style="left:0;top:105px;width:1244px;height:1px;background:#e4e4e4"></div>
<div class="abs" style="left:0;top:126px;width:1244px;height:1px;background:#e4e4e4"></div>
<div class="abs" style="left:0;top:147px;width:1244px;height:1px;background:#e4e4e4"></div>
<div class="abs" style="left:0;top:168px;width:1244px;height:1px;background:#e4e4e4"></div>
<div class="abs" style="left:0;top:189px;width:1244px;height:1px;background:#e4e4e4"></div>
<div class="abs" style="left:0;top:210px;width:1244px;height:1px;background:#e4e4e4"></div>
<div class="abs" style="left:0;top:231px;width:1244px;height:1px;background:#e4e4e4"></div>
<div class="abs" style="left:0;top:252px;width:1244px;height:1px;background:#e4e4e4"></div>
<div class="abs" style="left:0;top:273px;width:1244px;height:1px;background:#e4e4e4"></div>
<div class="abs" style="left:0;top:294px;width:1244px;height:1px;background:#e4e4e4"></div>
<div class="abs" style="left:0;top:315px;width:1244px;height:1px;background:#e4e4e4"></div>
<div class="abs" style="left:649px;top:21px;width:1px;height:1px;background:#fff"></div>
<div class="abs txt rn" style="top:22px">1</div>
<div class="abs txt cell" style="left:31px;top:22px">1</div>
<div class="abs txt cell" style="left:79px;top:22px">90</div>
<div class="abs txt cell" style="left:150px;top:22px;letter-spacing:-0.13px">2022-08-21 18:20:38.0</div>
<div class="abs txt cell" style="left:299px;top:22px">442.25</div>
<div class="abs txt cell" style="left:360px;top:22px">661.7999877929688</div>
<div class="abs txt cell" style="left:507px;top:22px">99.2699966430664</div>
<div class="abs txt cell" style="left:655px;top:22px">761.0700073242188</div>
<div class="abs txt cell" style="left:802px;top:22px;letter-spacing:-0.37px">321D55AC-AD43-4B6E-AA46-6F1CB1076FC8</div>
<div class="abs txt cell" style="left:1092px;top:22px">10k</div>
<div class="abs txt cell" style="left:1149px;top:22px">true</div>
<div class="abs txt cell" style="left:1194px;top:22px">false</div>
<div class="abs txt rn" style="top:43px">2</div>
<div class="abs txt cell" style="left:31px;top:43px">2</div>
<div class="abs txt cell" style="left:79px;top:43px">90</div>
<div class="abs txt cell" style="left:150px;top:43px;letter-spacing:-0.13px">2022-09-08 18:21:31.0</div>
<div class="abs txt cell" style="left:299px;top:43px">444.75</div>
<div class="abs txt cell" style="left:360px;top:43px">671.7999877929688</div>
<div class="abs txt cell" style="left:507px;top:43px">100.7699966430664</div>
<div class="abs txt cell" style="left:655px;top:43px">772.5700073242188</div>
<div class="abs txt cell" style="left:802px;top:43px;letter-spacing:-0.37px">321D55AC-AD43-4B6E-AA46-6F1CB1076FC8</div>
<div class="abs txt cell" style="left:1092px;top:43px">10k</div>
<div class="abs txt cell" style="left:1149px;top:43px">true</div>
<div class="abs txt cell" style="left:1194px;top:43px">false</div>
<div class="abs txt rn" style="top:64px">3</div>
<div class="abs txt cell" style="left:31px;top:64px">3</div>
<div class="abs txt cell" style="left:79px;top:64px">90</div>
<div class="abs txt cell" style="left:150px;top:64px;letter-spacing:-0.13px">2022-10-03 11:54:02.0</div>
<div class="abs txt cell" style="left:299px;top:64px">449.75</div>
<div class="abs txt cell" style="left:360px;top:64px">691.7999877929688</div>
<div class="abs txt cell" style="left:507px;top:64px">103.7699966430664</div>
<div class="abs txt cell" style="left:655px;top:64px">795.5700073242188</div>
<div class="abs txt cell" style="left:802px;top:64px;letter-spacing:-0.37px">321D55AC-AD43-4B6E-AA46-6F1CB1076FC8</div>
<div class="abs txt cell" style="left:1092px;top:64px">10k</div>
<div class="abs txt cell" style="left:1149px;top:64px">true</div>
<div class="abs txt cell" style="left:1194px;top:64px">false</div>
<div class="abs txt rn" style="top:85px">4</div>
<div class="abs txt cell" style="left:31px;top:85px">4</div>
<div class="abs txt cell" style="left:79px;top:85px">90</div>
<div class="abs txt cell" style="left:150px;top:85px;letter-spacing:-0.13px">2022-11-08 13:39:16.0</div>
<div class="abs txt cell" style="left:299px;top:85px">457.25</div>
<div class="abs txt cell" style="left:360px;top:85px">721.7999877929688</div>
<div class="abs txt cell" style="left:507px;top:85px">108.2699966430664</div>
<div class="abs txt cell" style="left:655px;top:85px">830.0700073242188</div>
<div class="abs txt cell" style="left:802px;top:85px;letter-spacing:-0.37px">321D55AC-AD43-4B6E-AA46-6F1CB1076FC8</div>
<div class="abs txt cell" style="left:1092px;top:85px">10k</div>
<div class="abs txt cell" style="left:1149px;top:85px">true</div>
<div class="abs txt cell" style="left:1194px;top:85px">false</div>
<div class="abs txt rn" style="top:106px">5</div>
<div class="abs txt cell" style="left:31px;top:106px">5</div>
<div class="abs txt cell" style="left:79px;top:106px">90</div>
<div class="abs txt cell" style="left:150px;top:106px;letter-spacing:-0.13px">2022-12-04 16:58:10.0</div>
<div class="abs txt cell" style="left:299px;top:106px">467.25</div>
<div class="abs txt cell" style="left:360px;top:106px">761.7999877929688</div>
<div class="abs txt cell" style="left:507px;top:106px">114.2699966430664</div>
<div class="abs txt cell" style="left:655px;top:106px">876.0700073242188</div>
<div class="abs txt cell" style="left:802px;top:106px;letter-spacing:-0.37px">321D55AC-AD43-4B6E-AA46-6F1CB1076FC8</div>
<div class="abs txt cell" style="left:1092px;top:106px">10k</div>
<div class="abs txt cell" style="left:1149px;top:106px">true</div>
<div class="abs txt cell" style="left:1194px;top:106px">false</div>
<div class="abs txt rn" style="top:127px">6</div>
<div class="abs txt cell" style="left:31px;top:127px">6</div>
<div class="abs txt cell" style="left:79px;top:127px">90</div>
<div class="abs txt cell" style="left:150px;top:127px;letter-spacing:-0.13px">2023-01-09 16:02:06.0</div>
<div class="abs txt cell" style="left:299px;top:127px">479.75</div>
<div class="abs txt cell" style="left:360px;top:127px">811.7999877929688</div>
<div class="abs txt cell" style="left:507px;top:127px">121.7699966430664</div>
<div class="abs txt cell" style="left:655px;top:127px">933.5700073242188</div>
<div class="abs txt cell" style="left:802px;top:127px;letter-spacing:-0.37px">321D55AC-AD43-4B6E-AA46-6F1CB1076FC8</div>
<div class="abs txt cell" style="left:1092px;top:127px">10k</div>
<div class="abs txt cell" style="left:1149px;top:127px">true</div>
<div class="abs txt cell" style="left:1194px;top:127px">false</div>
<div class="abs txt rn" style="top:148px">7</div>
<div class="abs txt cell" style="left:31px;top:148px">7</div>
<div class="abs txt cell" style="left:79px;top:148px">90</div>
<div class="abs txt cell" style="left:150px;top:148px;letter-spacing:-0.13px">2023-02-20 18:11:45.0</div>
<div class="abs txt cell" style="left:299px;top:148px">494.75</div>
<div class="abs txt cell" style="left:360px;top:148px">871.7999877929688</div>
<div class="abs txt cell" style="left:507px;top:148px">130.77000427246094</div>
<div class="abs txt cell" style="left:655px;top:148px">1002.5700073242188</div>
<div class="abs txt cell" style="left:802px;top:148px;letter-spacing:-0.37px">321D55AC-AD43-4B6E-AA46-6F1CB1076FC8</div>
<div class="abs txt cell" style="left:1092px;top:148px">10k</div>
<div class="abs txt cell" style="left:1149px;top:148px">true</div>
<div class="abs txt cell" style="left:1194px;top:148px">false</div>
<div class="abs txt rn" style="top:169px">8</div>
<div class="abs txt cell" style="left:31px;top:169px">8</div>
<div class="abs txt cell" style="left:79px;top:169px">90</div>
<div class="abs txt cell" style="left:150px;top:169px;letter-spacing:-0.13px">2023-03-09 13:41:29.0</div>
<div class="abs txt cell" style="left:299px;top:169px">512.25</div>
<div class="abs txt cell" style="left:360px;top:169px">941.7999877929688</div>
<div class="abs txt cell" style="left:507px;top:169px">141.27000427246094</div>
<div class="abs txt cell" style="left:655px;top:169px">1083.0699462890625</div>
<div class="abs txt cell" style="left:802px;top:169px;letter-spacing:-0.37px">321D55AC-AD43-4B6E-AA46-6F1CB1076FC8</div>
<div class="abs txt cell" style="left:1092px;top:169px">10k</div>
<div class="abs txt cell" style="left:1149px;top:169px">true</div>
<div class="abs txt cell" style="left:1194px;top:169px">false</div>
<div class="abs txt rn" style="top:190px">9</div>
<div class="abs txt cell" style="left:31px;top:190px">9</div>
<div class="abs txt cell" style="left:79px;top:190px">90</div>
<div class="abs txt cell" style="left:150px;top:190px;letter-spacing:-0.13px">2023-04-01 10:27:01.0</div>
<div class="abs txt cell" style="left:299px;top:190px">532.5</div>
<div class="abs txt cell" style="left:360px;top:190px">1022.7999877929688</div>
<div class="abs txt cell" style="left:507px;top:190px">153.4199981689453</div>
<div class="abs txt cell" style="left:655px;top:190px">1176.219970703125</div>
<div class="abs txt cell" style="left:802px;top:190px;letter-spacing:-0.37px">321D55AC-AD43-4B6E-AA46-6F1CB1076FC8</div>
<div class="abs txt cell" style="left:1092px;top:190px">10k</div>
<div class="abs txt cell" style="left:1149px;top:190px">true</div>
<div class="abs txt cell" style="left:1194px;top:190px">false</div>
<div class="abs txt rn" style="top:211px">10</div>
<div class="abs txt cell" style="left:31px;top:211px">10</div>
<div class="abs txt cell" style="left:79px;top:211px">90</div>
<div class="abs txt cell" style="left:150px;top:211px;letter-spacing:-0.13px">2023-05-20 13:48:49.0</div>
<div class="abs txt cell" style="left:299px;top:211px">555.25</div>
<div class="abs txt cell" style="left:360px;top:211px">1113.800048828125</div>
<div class="abs txt cell" style="left:507px;top:211px">167.07000732421875</div>
<div class="abs txt cell" style="left:655px;top:211px">1280.8699951171875</div>
<div class="abs txt cell" style="left:802px;top:211px;letter-spacing:-0.37px">321D55AC-AD43-4B6E-AA46-6F1CB1076FC8</div>
<div class="abs txt cell" style="left:1092px;top:211px">10k</div>
<div class="abs txt cell" style="left:1149px;top:211px">true</div>
<div class="abs txt cell" style="left:1194px;top:211px">false</div>
<div class="abs txt rn" style="top:232px">11</div>
<div class="abs txt cell" style="left:31px;top:232px">11</div>
<div class="abs txt cell" style="left:79px;top:232px">90</div>
<div class="abs txt cell" style="left:150px;top:232px;letter-spacing:-0.13px">2023-06-27 10:47:14.0</div>
<div class="abs txt cell" style="left:299px;top:232px">580.5</div>
<div class="abs txt cell" style="left:360px;top:232px">1214.800048828125</div>
<div class="abs txt cell" style="left:507px;top:232px">182.22000122070312</div>
<div class="abs txt cell" style="left:655px;top:232px">1397.02001953125</div>
<div class="abs txt cell" style="left:802px;top:232px;letter-spacing:-0.37px">321D55AC-AD43-4B6E-AA46-6F1CB1076FC8</div>
<div class="abs txt cell" style="left:1092px;top:232px">10k</div>
<div class="abs txt cell" style="left:1149px;top:232px">true</div>
<div class="abs txt cell" style="left:1194px;top:232px">false</div>
<div class="abs txt rn" style="top:253px">12</div>
<div class="abs txt cell" style="left:31px;top:253px">12</div>
<div class="abs txt cell" style="left:79px;top:253px">90</div>
<div class="abs txt cell" style="left:150px;top:253px;letter-spacing:-0.13px">2023-07-31 10:41:18.0</div>
<div class="abs txt cell" style="left:299px;top:253px">608.25</div>
<div class="abs txt cell" style="left:360px;top:253px">1325.800048828125</div>
<div class="abs txt cell" style="left:507px;top:253px">198.8699951171875</div>
<div class="abs txt cell" style="left:655px;top:253px">1524.6700439453125</div>
<div class="abs txt cell" style="left:802px;top:253px;letter-spacing:-0.37px">321D55AC-AD43-4B6E-AA46-6F1CB1076FC8</div>
<div class="abs txt cell" style="left:1092px;top:253px">10k</div>
<div class="abs txt cell" style="left:1149px;top:253px">true</div>
<div class="abs txt cell" style="left:1194px;top:253px">false</div>
<div class="abs txt rn" style="top:274px">13</div>
<div class="abs txt cell" style="left:31px;top:274px">13</div>
<div class="abs txt cell" style="left:79px;top:274px">90</div>
<div class="abs txt cell" style="left:150px;top:274px;letter-spacing:-0.13px">2023-08-12 12:47:32.0</div>
<div class="abs txt cell" style="left:299px;top:274px">638.5</div>
<div class="abs txt cell" style="left:360px;top:274px">1446.800048828125</div>
<div class="abs txt cell" style="left:507px;top:274px">217.02000427246094</div>
<div class="abs txt cell" style="left:655px;top:274px">1663.8199462890625</div>
<div class="abs txt cell" style="left:802px;top:274px;letter-spacing:-0.37px">321D55AC-AD43-4B6E-AA46-6F1CB1076FC8</div>
<div class="abs txt cell" style="left:1092px;top:274px">10k</div>
<div class="abs txt cell" style="left:1149px;top:274px">true</div>
<div class="abs txt cell" style="left:1194px;top:274px">false</div>
<div class="abs txt rn" style="top:295px">14</div>
<div class="abs txt cell" style="left:31px;top:295px">14</div>
<div class="abs txt cell" style="left:79px;top:295px">90</div>
<div class="abs txt cell" style="left:150px;top:295px;letter-spacing:-0.13px">2023-09-30 13:16:33.0</div>
<div class="abs txt cell" style="left:299px;top:295px">671.25</div>
<div class="abs txt cell" style="left:360px;top:295px">1577.800048828125</div>
<div class="abs txt cell" style="left:507px;top:295px">236.6699981689453</div>
<div class="abs txt cell" style="left:655px;top:295px">1814.469970703125</div>
<div class="abs txt cell" style="left:802px;top:295px;letter-spacing:-0.37px">321D55AC-AD43-4B6E-AA46-6F1CB1076FC8</div>
<div class="abs txt cell" style="left:1092px;top:295px">10k</div>
<div class="abs txt cell" style="left:1149px;top:295px">true</div>
<div class="abs txt cell" style="left:1194px;top:295px">false</div>
</div>
<div class="abs" style="left:1245px;top:842px;width:4px;height:279.5px;border-radius:0 0 0 3px;background:#e2e3e7"></div>
<div class="abs" style="left:1245px;top:822.5px;width:4px;height:20px;border-radius:3px 0 0 3px;background:#d2d3d6"></div>
<div class="abs" style="left:1px;top:1122px;width:1242px;height:2px;border-radius:0 2px 0 0;background:#dfe0e4"></div>
</body></html>
